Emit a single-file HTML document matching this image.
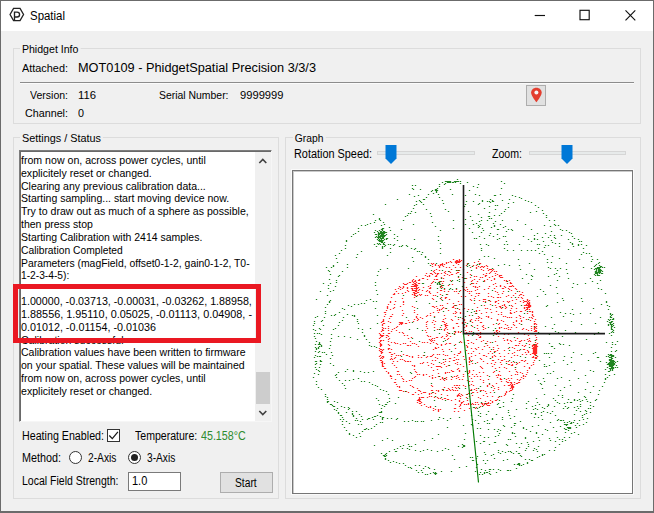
<!DOCTYPE html>
<html><head><meta charset="utf-8"><title>Spatial</title>
<style>
html,body{margin:0;padding:0;}
body{width:654px;height:513px;overflow:hidden;background:#f0f0f0;font-family:"Liberation Sans",sans-serif;font-size:11px;color:#000;position:relative;}
.abs,.t{position:absolute;}
.t,.line,.glabel{transform-origin:0 0;}
.t{white-space:nowrap;line-height:13px;height:13px;}
#win{position:absolute;left:0;top:0;width:652px;height:510px;border:1px solid #6b6b6b;border-bottom-width:2px;background:#f0f0f0;}
#titlebar{position:absolute;left:1px;top:1px;width:652px;height:30px;background:#fff;}
.grp{position:absolute;border:1px solid #dcdcdc;box-sizing:border-box;}
.glabel{position:absolute;background:#f0f0f0;padding:0 2px;line-height:13px;white-space:nowrap;}
.f12{font-size:12px;line-height:14px;height:14px;}
#tbo{position:absolute;left:19px;top:150px;width:253px;height:272px;box-sizing:border-box;border:1px solid #7c7c7c;border-right-color:#f6f6f6;border-bottom-color:#f6f6f6;}
#tb{position:absolute;left:20px;top:151px;width:251px;height:270px;box-sizing:border-box;background:#fff;border:1px solid #696969;border-right:0;border-bottom:0;overflow:hidden;}
#tb .line{position:absolute;left:2px;white-space:nowrap;line-height:13px;height:13px;}
#sb{position:absolute;left:234px;top:0;width:16px;height:269px;background:#f0f0f0;}
#thumb{position:absolute;left:1px;top:220px;width:14px;height:32px;background:#cdcdcd;}
#redbox{position:absolute;left:13px;top:284px;width:238px;height:49px;border:5px solid #ea1822;}
.btn{position:absolute;box-sizing:border-box;background:#e1e1e1;border:1px solid #adadad;}
.track{position:absolute;height:4px;background:#e7eaea;border:1px solid #d6d6d6;box-sizing:border-box;}
#canvas{position:absolute;left:292px;top:170px;width:341px;height:324px;box-sizing:border-box;background:#fff;border:1px solid #767676;box-shadow:0 0 0 1px #fafafa, inset 1px 1px 0 0 #cacaca;}
</style></head><body>
<div id="win"></div>
<div id="titlebar">
 <svg class="abs" style="left:7px;top:5px" width="20" height="20" viewBox="0 0 20 20">
  <g transform="translate(8.8,8.5) scale(0.925) translate(-9.1,-9.25)">
  <path d="M1.8 9.3 L5.6 2.6 H12.6 L16.4 9.3 L12.6 15.9 H5.6 Z" fill="none" stroke="#222" stroke-width="1.4"/>
  <path d="M6.6 15.6 V6.6 H9.4 A2.7 2.7 0 0 1 9.4 12 H6.8" fill="none" stroke="#222" stroke-width="1.45"/>
  </g>
 </svg>
 <div class="t" id="title" style="transform:scaleX(0.9536);left:29px;top:7px;font-size:12px;line-height:16px;height:16px;">Spatial</div>
 <svg class="abs" style="left:520px;top:0" width="132" height="30" viewBox="0 0 132 30">
  <path d="M13.7 14.5H24" stroke="#111" stroke-width="1.15" fill="none"/>
  <rect x="59" y="9.3" width="9.2" height="9.4" stroke="#111" stroke-width="1.15" fill="none"/>
  <path d="M104.5 9.3L114.3 19.3M114.3 9.3L104.5 19.3" stroke="#111" stroke-width="1.15" fill="none"/>
 </svg>
</div>

<!-- Phidget Info group -->
<div class="grp" style="left:13px;top:48px;width:628px;height:76px;"></div>
<div class="glabel" id="g1" style="transform:scaleX(0.9622);left:20px;top:43px;">Phidget Info</div>
<div class="t" id="att" style="transform:scaleX(0.9896);left:22px;top:62px;">Attached:</div>
<div class="t" id="dev" style="transform:scaleX(1.0194);left:78px;top:60px;font-size:12.5px;line-height:16px;height:16px;">MOT0109 - PhidgetSpatial Precision 3/3/3</div>
<div class="abs" style="left:20px;top:82px;width:614px;height:1px;background:#8c8c8c;"></div>
<div class="abs" style="left:20px;top:83px;width:614px;height:1px;background:#fbfbfb;"></div>
<div class="t" id="ver" style="transform:scaleX(0.9560);left:30px;top:89px;">Version:</div>
<div class="t" id="verv" style="transform:scaleX(1.0258);left:78px;top:89px;">116</div>
<div class="t" id="ser" style="transform:scaleX(0.9474);left:159px;top:89px;">Serial Number:</div>
<div class="t" id="serv" style="transform:scaleX(1.0157);left:240px;top:89px;">9999999</div>
<div class="t" id="chan" style="transform:scaleX(0.9762);left:25px;top:107px;">Channel:</div>
<div class="t" id="chanv" style="transform:scaleX(0.9796);left:78px;top:107px;">0</div>
<div class="btn" style="left:526px;top:85px;width:20px;height:21px;"></div>
<svg class="abs" style="left:530px;top:87px" width="13" height="16" viewBox="0 0 13 16">
 <path d="M6.4 0.7C3.3 0.7 1.1 2.9 1.1 5.6C1.1 9 6.4 15.3 6.4 15.3C6.4 15.3 11.7 9 11.7 5.6C11.7 2.9 9.5 0.7 6.4 0.7Z" fill="#e33e2f"/>
 <circle cx="6.4" cy="5.4" r="2" fill="#f6f6f6"/>
</svg>

<!-- Settings group -->
<div class="grp" style="left:13px;top:137px;width:266px;height:362px;"></div>
<div class="glabel" id="g2" style="transform:scaleX(0.9862);left:20px;top:132px;">Settings / Status</div>
<div id="tbo"></div>
<div id="tb">
 <div class="line" id="L0" style="left:0.3px;top:1.90px;transform:scaleX(0.9627);">from now on, across power cycles, until</div>
 <div class="line" id="L1" style="left:0.3px;top:14.73px;transform:scaleX(0.9585);">explicitely reset or changed.</div>
 <div class="line" id="L2" style="left:0.3px;top:27.56px;transform:scaleX(0.9564);">Clearing any previous calibration data...</div>
 <div class="line" id="L3" style="left:0.3px;top:40.39px;transform:scaleX(0.9560);">Starting sampling... start moving device now.</div>
 <div class="line" id="L4" style="left:0.3px;top:53.22px;transform:scaleX(0.9615);">Try to draw out as much of a sphere as possible,</div>
 <div class="line" id="L5" style="left:0.3px;top:66.05px;transform:scaleX(0.9559);">then press stop</div>
 <div class="line" id="L6" style="left:0.3px;top:78.88px;transform:scaleX(0.9504);">Starting Calibration with 2414 samples.</div>
 <div class="line" id="L7" style="left:0.3px;top:91.71px;transform:scaleX(0.9344);">Calibration Completed</div>
 <div class="line" id="L8" style="left:0.3px;top:104.54px;transform:scaleX(0.9434);">Parameters (magField, offset0-1-2, gain0-1-2, T0-</div>
 <div class="line" id="L9" style="left:0.3px;top:117.37px;transform:scaleX(0.9294);">1-2-3-4-5):</div>
 <div class="line" id="L11" style="left:0.3px;top:143.03px;transform:scaleX(0.9726);">1.00000, -0.03713, -0.00031, -0.03262, 1.88958,</div>
 <div class="line" id="L12" style="left:0.3px;top:155.86px;transform:scaleX(0.9861);">1.88556, 1.95110, 0.05025, -0.01113, 0.04908, -</div>
 <div class="line" id="L13" style="left:0.3px;top:168.69px;transform:scaleX(0.9780);">0.01012, -0.01154, -0.01036</div>
 <div class="line" id="L14" style="left:0.3px;top:181.52px;transform:scaleX(0.9579);">Calibration successful</div>
 <div class="line" id="L15" style="left:0.3px;top:194.35px;transform:scaleX(0.9562);">Calibration values have been written to firmware</div>
 <div class="line" id="L16" style="left:0.3px;top:207.18px;transform:scaleX(0.9585);">on your spatial. These values will be maintained</div>
 <div class="line" id="L17" style="left:0.3px;top:220.01px;transform:scaleX(0.9621);">from now on, across power cycles, until</div>
 <div class="line" id="L18" style="left:0.3px;top:232.84px;transform:scaleX(0.9622);">explicitely reset or changed.</div>
 <div id="sb">
  <svg class="abs" style="left:0;top:0" width="16" height="269" viewBox="0 0 16 269">
   <path d="M4.3 11L7.8 7.5L11.3 11" stroke="#404040" stroke-width="1.6" fill="none"/>
   <path d="M4.3 259L7.8 262.5L11.3 259" stroke="#404040" stroke-width="1.6" fill="none"/>
  </svg>
  <div id="thumb"></div>
 </div>
</div>
<div id="redbox"></div>

<div class="t f12" id="heat" style="transform:scaleX(0.8905);left:22px;top:429px;">Heating Enabled:</div>
<div class="abs" style="left:107px;top:429px;width:13px;height:13px;box-sizing:border-box;border:1px solid #333;background:#fff;"></div>
<svg class="abs" style="left:107px;top:429px" width="13" height="13" viewBox="0 0 13 13"><path d="M2.3 6.5L5.3 9.6L10.9 2.9" stroke="#1a1a1a" stroke-width="1.25" fill="none"/></svg>
<div class="t f12" id="temp" style="transform:scaleX(0.8797);left:135px;top:429px;">Temperature:</div>
<div class="t f12" id="tempv" style="transform:scaleX(0.8909);left:201px;top:429px;color:#2e8b2e;">45.158°C</div>

<div class="t f12" id="meth" style="transform:scaleX(0.8995);left:22px;top:451px;">Method:</div>
<div class="abs" style="left:69px;top:451px;width:13px;height:13px;box-sizing:border-box;border:1px solid #333;border-radius:50%;background:#fff;"></div>
<div class="t f12" id="ax2" style="transform:scaleX(0.8547);left:88px;top:451px;">2-Axis</div>
<div class="abs" style="left:128px;top:451px;width:13px;height:13px;box-sizing:border-box;border:1px solid #333;border-radius:50%;background:#fff;"></div>
<div class="abs" style="left:131px;top:454px;width:7px;height:7px;border-radius:50%;background:#222;"></div>
<div class="t f12" id="ax3" style="transform:scaleX(0.8487);left:147px;top:451px;">3-Axis</div>

<div class="t f12" id="lfs" style="transform:scaleX(0.8768);left:22px;top:474px;">Local Field Strength:</div>
<div class="abs" style="left:128px;top:472px;width:53px;height:19px;box-sizing:border-box;border:1px solid #7a7a7a;background:#fff;"></div>
<div class="t f12" id="lfsv" style="transform:scaleX(0.9169);left:132px;top:474px;">1.0</div>
<div class="btn" style="left:220px;top:472px;width:53px;height:21px;"></div>
<div class="t f12" id="start" style="transform:scaleX(0.8562);left:235px;top:476px;">Start</div>

<!-- Graph group -->
<div class="grp" style="left:285px;top:137px;width:356px;height:362px;"></div>
<div class="glabel" id="g3" style="transform:scaleX(0.9353);left:293px;top:132px;">Graph</div>
<div class="t f12" id="rot" style="transform:scaleX(0.9063);left:294px;top:147px;">Rotation Speed:</div>
<div class="track" style="left:377px;top:151px;width:98px;"></div>
<svg class="abs" style="left:385px;top:145px" width="12" height="20" viewBox="0 0 12 20"><path d="M0.5 0H11.5V13.5L6 19L0.5 13.5Z" fill="#0078d7"/></svg>
<div class="t f12" id="zoom" style="transform:scaleX(0.8819);left:492px;top:147px;">Zoom:</div>
<div class="track" style="left:529px;top:151px;width:97px;"></div>
<svg class="abs" style="left:561px;top:145px" width="12" height="20" viewBox="0 0 12 20"><path d="M0.5 0H11.5V13.5L6 19L0.5 13.5Z" fill="#0078d7"/></svg>
<div id="canvas">
 <svg class="abs" style="left:0;top:0" width="339" height="322" viewBox="0 0 339 322">
  <path d="M138.85 92.90h1.3v1.2h-1.3zM137.85 91.90h1.3v1.2h-1.3zM139.85 91.90h1.3v1.2h-1.3zM141.85 93.90h1.3v1.2h-1.3zM141.85 92.90h1.3v1.2h-1.3zM144.85 93.90h1.3v1.2h-1.3zM146.85 92.90h1.3v1.2h-1.3zM147.85 92.90h1.3v1.2h-1.3zM148.85 92.90h1.3v1.2h-1.3zM152.85 91.90h1.3v1.2h-1.3zM152.85 90.90h1.3v1.2h-1.3zM154.85 90.90h1.3v1.2h-1.3zM156.85 89.90h1.3v1.2h-1.3zM157.85 90.90h1.3v1.2h-1.3zM159.85 87.90h1.3v1.2h-1.3zM134.85 114.90h1.3v1.2h-1.3zM152.85 95.90h1.3v1.2h-1.3zM143.85 120.90h1.3v1.2h-1.3zM148.85 91.90h1.3v1.2h-1.3zM138.85 94.90h1.3v1.2h-1.3zM135.85 103.90h1.3v1.2h-1.3zM133.85 123.90h1.3v1.2h-1.3zM143.85 107.90h1.3v1.2h-1.3zM150.85 117.90h1.3v1.2h-1.3zM155.85 103.90h1.3v1.2h-1.3zM141.85 104.90h1.3v1.2h-1.3zM131.85 103.90h1.3v1.2h-1.3zM151.85 125.90h1.3v1.2h-1.3zM154.85 113.90h1.3v1.2h-1.3zM141.85 101.90h1.3v1.2h-1.3zM150.85 92.90h1.3v1.2h-1.3zM142.85 107.90h1.3v1.2h-1.3zM154.85 119.90h1.3v1.2h-1.3zM149.85 94.90h1.3v1.2h-1.3zM153.85 122.90h1.3v1.2h-1.3zM147.85 101.90h1.3v1.2h-1.3zM146.85 93.90h1.3v1.2h-1.3zM152.85 125.90h1.3v1.2h-1.3zM146.85 115.90h1.3v1.2h-1.3zM155.85 95.90h1.3v1.2h-1.3zM158.85 112.90h1.3v1.2h-1.3zM138.85 110.90h1.3v1.2h-1.3zM151.85 101.90h1.3v1.2h-1.3zM158.85 102.90h1.3v1.2h-1.3zM159.85 93.90h1.3v1.2h-1.3zM157.85 109.90h1.3v1.2h-1.3zM147.85 109.90h1.3v1.2h-1.3zM139.85 123.90h1.3v1.2h-1.3zM160.85 119.90h1.3v1.2h-1.3zM148.85 93.90h1.3v1.2h-1.3zM155.85 99.90h1.3v1.2h-1.3zM157.85 97.90h1.3v1.2h-1.3zM145.85 94.90h1.3v1.2h-1.3zM145.85 95.90h1.3v1.2h-1.3zM145.85 98.90h1.3v1.2h-1.3zM142.85 97.90h1.3v1.2h-1.3zM140.85 98.90h1.3v1.2h-1.3zM139.85 99.90h1.3v1.2h-1.3zM137.85 101.90h1.3v1.2h-1.3zM136.85 101.90h1.3v1.2h-1.3zM135.85 104.90h1.3v1.2h-1.3zM133.85 104.90h1.3v1.2h-1.3zM133.85 107.90h1.3v1.2h-1.3zM129.85 106.90h1.3v1.2h-1.3zM128.85 106.90h1.3v1.2h-1.3zM124.85 108.90h1.3v1.2h-1.3zM125.85 108.90h1.3v1.2h-1.3zM121.85 108.90h1.3v1.2h-1.3zM120.85 109.90h1.3v1.2h-1.3zM119.85 110.90h1.3v1.2h-1.3zM118.85 109.90h1.3v1.2h-1.3zM115.85 110.90h1.3v1.2h-1.3zM113.85 111.90h1.3v1.2h-1.3zM111.85 112.90h1.3v1.2h-1.3zM110.85 112.90h1.3v1.2h-1.3zM109.85 114.90h1.3v1.2h-1.3zM109.85 115.90h1.3v1.2h-1.3zM105.85 114.90h1.3v1.2h-1.3zM104.85 116.90h1.3v1.2h-1.3zM101.85 117.90h1.3v1.2h-1.3zM102.85 119.90h1.3v1.2h-1.3zM100.85 121.90h1.3v1.2h-1.3zM99.85 122.90h1.3v1.2h-1.3zM100.85 122.90h1.3v1.2h-1.3zM97.85 125.90h1.3v1.2h-1.3zM124.85 118.90h1.3v1.2h-1.3zM120.85 120.90h1.3v1.2h-1.3zM125.85 111.90h1.3v1.2h-1.3zM120.85 116.90h1.3v1.2h-1.3zM120.85 125.90h1.3v1.2h-1.3zM122.85 114.90h1.3v1.2h-1.3zM122.85 113.90h1.3v1.2h-1.3zM125.85 107.90h1.3v1.2h-1.3zM121.85 121.90h1.3v1.2h-1.3zM122.85 124.90h1.3v1.2h-1.3zM122.85 116.90h1.3v1.2h-1.3zM121.85 112.90h1.3v1.2h-1.3zM124.85 111.90h1.3v1.2h-1.3zM121.85 114.90h1.3v1.2h-1.3zM119.85 107.90h1.3v1.2h-1.3zM121.85 119.90h1.3v1.2h-1.3zM120.85 113.90h1.3v1.2h-1.3zM119.85 120.90h1.3v1.2h-1.3zM122.85 112.90h1.3v1.2h-1.3zM123.85 113.90h1.3v1.2h-1.3zM120.85 122.90h1.3v1.2h-1.3zM125.85 122.90h1.3v1.2h-1.3zM119.85 118.90h1.3v1.2h-1.3zM120.85 114.90h1.3v1.2h-1.3zM121.85 123.90h1.3v1.2h-1.3zM122.85 118.90h1.3v1.2h-1.3zM121.85 113.90h1.3v1.2h-1.3zM120.85 121.90h1.3v1.2h-1.3zM121.85 116.90h1.3v1.2h-1.3zM118.85 117.90h1.3v1.2h-1.3zM118.85 122.90h1.3v1.2h-1.3zM118.85 114.90h1.3v1.2h-1.3zM121.85 111.90h1.3v1.2h-1.3zM117.85 116.90h1.3v1.2h-1.3zM120.85 111.90h1.3v1.2h-1.3zM122.85 115.90h1.3v1.2h-1.3zM118.85 118.90h1.3v1.2h-1.3zM121.85 109.90h1.3v1.2h-1.3zM118.85 112.90h1.3v1.2h-1.3zM121.85 118.90h1.3v1.2h-1.3zM123.85 116.90h1.3v1.2h-1.3zM120.85 123.90h1.3v1.2h-1.3zM124.85 120.90h1.3v1.2h-1.3zM119.85 114.90h1.3v1.2h-1.3zM122.85 119.90h1.3v1.2h-1.3zM122.85 117.90h1.3v1.2h-1.3zM119.85 112.90h1.3v1.2h-1.3zM123.85 120.90h1.3v1.2h-1.3zM122.85 121.90h1.3v1.2h-1.3zM122.85 110.90h1.3v1.2h-1.3zM120.85 118.90h1.3v1.2h-1.3zM118.85 116.90h1.3v1.2h-1.3zM143.85 101.90h1.3v1.2h-1.3zM142.85 103.90h1.3v1.2h-1.3zM142.85 104.90h1.3v1.2h-1.3zM140.85 107.90h1.3v1.2h-1.3zM139.85 109.90h1.3v1.2h-1.3zM137.85 111.90h1.3v1.2h-1.3zM136.85 113.90h1.3v1.2h-1.3zM136.85 115.90h1.3v1.2h-1.3zM135.85 116.90h1.3v1.2h-1.3zM135.85 119.90h1.3v1.2h-1.3zM151.85 99.90h1.3v1.2h-1.3zM150.85 100.90h1.3v1.2h-1.3zM150.85 103.90h1.3v1.2h-1.3zM147.85 105.90h1.3v1.2h-1.3zM149.85 106.90h1.3v1.2h-1.3zM149.85 109.90h1.3v1.2h-1.3zM148.85 111.90h1.3v1.2h-1.3zM147.85 113.90h1.3v1.2h-1.3zM147.85 114.90h1.3v1.2h-1.3zM147.85 118.90h1.3v1.2h-1.3zM146.85 118.90h1.3v1.2h-1.3zM146.85 122.90h1.3v1.2h-1.3zM147.85 125.90h1.3v1.2h-1.3zM124.85 115.90h1.3v1.2h-1.3zM125.85 117.90h1.3v1.2h-1.3zM128.85 118.90h1.3v1.2h-1.3zM132.85 119.90h1.3v1.2h-1.3zM133.85 118.90h1.3v1.2h-1.3zM135.85 120.90h1.3v1.2h-1.3zM136.85 121.90h1.3v1.2h-1.3zM141.85 123.90h1.3v1.2h-1.3zM113.85 115.90h1.3v1.2h-1.3zM113.85 118.90h1.3v1.2h-1.3zM111.85 120.90h1.3v1.2h-1.3zM108.85 121.90h1.3v1.2h-1.3zM108.85 126.90h1.3v1.2h-1.3zM164.85 89.90h1.3v1.2h-1.3zM163.85 89.90h1.3v1.2h-1.3zM165.85 90.90h1.3v1.2h-1.3zM165.85 89.90h1.3v1.2h-1.3zM165.85 88.90h1.3v1.2h-1.3zM162.85 89.90h1.3v1.2h-1.3zM162.85 90.90h1.3v1.2h-1.3zM163.85 88.90h1.3v1.2h-1.3zM163.85 90.90h1.3v1.2h-1.3zM161.85 90.90h1.3v1.2h-1.3zM164.85 90.90h1.3v1.2h-1.3zM162.85 91.90h1.3v1.2h-1.3zM167.85 88.90h1.3v1.2h-1.3zM166.85 89.90h1.3v1.2h-1.3zM165.85 87.90h1.3v1.2h-1.3zM161.85 89.90h1.3v1.2h-1.3zM162.85 88.90h1.3v1.2h-1.3zM184.85 89.90h1.3v1.2h-1.3zM185.85 91.90h1.3v1.2h-1.3zM186.85 91.90h1.3v1.2h-1.3zM188.85 94.90h1.3v1.2h-1.3zM187.85 94.90h1.3v1.2h-1.3zM190.85 94.90h1.3v1.2h-1.3zM192.85 93.90h1.3v1.2h-1.3zM193.85 96.90h1.3v1.2h-1.3zM197.85 97.90h1.3v1.2h-1.3zM196.85 97.90h1.3v1.2h-1.3zM198.85 98.90h1.3v1.2h-1.3zM200.85 99.90h1.3v1.2h-1.3zM201.85 101.90h1.3v1.2h-1.3zM203.85 102.90h1.3v1.2h-1.3zM205.85 104.90h1.3v1.2h-1.3zM206.85 103.90h1.3v1.2h-1.3zM207.85 105.90h1.3v1.2h-1.3zM208.85 105.90h1.3v1.2h-1.3zM212.85 108.90h1.3v1.2h-1.3zM212.85 109.90h1.3v1.2h-1.3zM213.85 111.90h1.3v1.2h-1.3zM216.85 111.90h1.3v1.2h-1.3zM217.85 111.90h1.3v1.2h-1.3zM218.85 113.90h1.3v1.2h-1.3zM219.85 114.90h1.3v1.2h-1.3zM221.85 116.90h1.3v1.2h-1.3zM222.85 117.90h1.3v1.2h-1.3zM225.85 119.90h1.3v1.2h-1.3zM228.85 120.90h1.3v1.2h-1.3zM227.85 122.90h1.3v1.2h-1.3zM229.85 123.90h1.3v1.2h-1.3zM208.85 121.90h1.3v1.2h-1.3zM212.85 124.90h1.3v1.2h-1.3zM192.85 101.90h1.3v1.2h-1.3zM169.85 97.90h1.3v1.2h-1.3zM173.85 100.90h1.3v1.2h-1.3zM163.85 98.90h1.3v1.2h-1.3zM173.85 91.90h1.3v1.2h-1.3zM197.85 108.90h1.3v1.2h-1.3zM200.85 116.90h1.3v1.2h-1.3zM197.85 124.90h1.3v1.2h-1.3zM166.85 95.90h1.3v1.2h-1.3zM165.85 98.90h1.3v1.2h-1.3zM214.85 123.90h1.3v1.2h-1.3zM183.85 109.90h1.3v1.2h-1.3zM181.85 118.90h1.3v1.2h-1.3zM203.85 120.90h1.3v1.2h-1.3zM193.85 94.90h1.3v1.2h-1.3zM227.85 125.90h1.3v1.2h-1.3zM162.85 117.90h1.3v1.2h-1.3zM172.85 93.90h1.3v1.2h-1.3zM161.85 95.90h1.3v1.2h-1.3zM206.85 105.90h1.3v1.2h-1.3zM179.85 111.90h1.3v1.2h-1.3zM186.85 105.90h1.3v1.2h-1.3zM185.85 121.90h1.3v1.2h-1.3zM201.85 103.90h1.3v1.2h-1.3zM198.85 104.90h1.3v1.2h-1.3zM184.85 123.90h1.3v1.2h-1.3zM177.85 123.90h1.3v1.2h-1.3zM221.85 121.90h1.3v1.2h-1.3zM172.85 106.90h1.3v1.2h-1.3zM172.85 115.90h1.3v1.2h-1.3zM177.85 109.90h1.3v1.2h-1.3zM171.85 124.90h1.3v1.2h-1.3zM180.85 90.90h1.3v1.2h-1.3zM200.85 106.90h1.3v1.2h-1.3zM195.85 97.90h1.3v1.2h-1.3zM201.85 111.90h1.3v1.2h-1.3zM195.85 105.90h1.3v1.2h-1.3zM206.85 125.90h1.3v1.2h-1.3zM180.85 104.90h1.3v1.2h-1.3zM166.85 118.90h1.3v1.2h-1.3zM177.85 119.90h1.3v1.2h-1.3zM190.85 108.90h1.3v1.2h-1.3zM194.85 98.90h1.3v1.2h-1.3zM184.85 94.90h1.3v1.2h-1.3zM175.85 119.90h1.3v1.2h-1.3zM217.85 125.90h1.3v1.2h-1.3zM217.85 114.90h1.3v1.2h-1.3zM217.85 118.90h1.3v1.2h-1.3zM173.85 119.90h1.3v1.2h-1.3zM182.85 96.90h1.3v1.2h-1.3zM196.85 100.90h1.3v1.2h-1.3zM216.85 110.90h1.3v1.2h-1.3zM225.85 123.90h1.3v1.2h-1.3zM182.85 93.90h1.3v1.2h-1.3zM209.85 116.90h1.3v1.2h-1.3zM169.85 115.90h1.3v1.2h-1.3zM164.85 121.90h1.3v1.2h-1.3zM215.85 117.90h1.3v1.2h-1.3zM195.85 101.90h1.3v1.2h-1.3zM171.85 118.90h1.3v1.2h-1.3zM176.85 112.90h1.3v1.2h-1.3zM215.85 114.90h1.3v1.2h-1.3zM197.85 99.90h1.3v1.2h-1.3zM179.85 93.90h1.3v1.2h-1.3zM206.85 113.90h1.3v1.2h-1.3zM226.85 122.90h1.3v1.2h-1.3zM181.85 124.90h1.3v1.2h-1.3zM204.85 125.90h1.3v1.2h-1.3zM180.85 107.90h1.3v1.2h-1.3zM194.85 116.90h1.3v1.2h-1.3zM178.85 94.90h1.3v1.2h-1.3zM164.85 100.90h1.3v1.2h-1.3zM205.85 103.90h1.3v1.2h-1.3zM189.85 95.90h1.3v1.2h-1.3zM194.85 124.90h1.3v1.2h-1.3zM169.85 103.90h1.3v1.2h-1.3zM199.85 112.90h1.3v1.2h-1.3zM178.85 108.90h1.3v1.2h-1.3zM173.85 117.90h1.3v1.2h-1.3zM164.85 92.90h1.3v1.2h-1.3zM199.85 97.90h1.3v1.2h-1.3zM211.85 115.90h1.3v1.2h-1.3zM183.85 117.90h1.3v1.2h-1.3zM206.85 114.90h1.3v1.2h-1.3zM192.85 103.90h1.3v1.2h-1.3zM168.85 105.90h1.3v1.2h-1.3zM179.85 114.90h1.3v1.2h-1.3zM190.85 109.90h1.3v1.2h-1.3zM164.85 105.90h1.3v1.2h-1.3zM188.85 105.90h1.3v1.2h-1.3zM167.85 124.90h1.3v1.2h-1.3zM202.85 99.90h1.3v1.2h-1.3zM182.85 95.90h1.3v1.2h-1.3zM189.85 102.90h1.3v1.2h-1.3zM216.85 114.90h1.3v1.2h-1.3zM191.85 104.90h1.3v1.2h-1.3zM182.85 111.90h1.3v1.2h-1.3zM189.85 98.90h1.3v1.2h-1.3zM194.85 121.90h1.3v1.2h-1.3zM224.85 125.90h1.3v1.2h-1.3zM208.85 116.90h1.3v1.2h-1.3zM181.85 115.90h1.3v1.2h-1.3zM207.85 103.90h1.3v1.2h-1.3zM215.85 108.90h1.3v1.2h-1.3zM190.85 117.90h1.3v1.2h-1.3zM178.85 111.90h1.3v1.2h-1.3zM176.85 102.90h1.3v1.2h-1.3zM201.85 119.90h1.3v1.2h-1.3zM202.85 114.90h1.3v1.2h-1.3zM214.85 116.90h1.3v1.2h-1.3zM210.85 108.90h1.3v1.2h-1.3zM199.85 125.90h1.3v1.2h-1.3zM170.85 117.90h1.3v1.2h-1.3zM183.85 115.90h1.3v1.2h-1.3zM200.85 107.90h1.3v1.2h-1.3zM204.85 122.90h1.3v1.2h-1.3zM170.85 110.90h1.3v1.2h-1.3zM193.85 107.90h1.3v1.2h-1.3zM181.85 114.90h1.3v1.2h-1.3zM209.85 119.90h1.3v1.2h-1.3zM187.85 97.90h1.3v1.2h-1.3zM185.85 107.90h1.3v1.2h-1.3zM162.85 101.90h1.3v1.2h-1.3zM182.85 121.90h1.3v1.2h-1.3zM195.85 114.90h1.3v1.2h-1.3zM162.85 119.90h1.3v1.2h-1.3zM210.85 114.90h1.3v1.2h-1.3zM184.85 121.90h1.3v1.2h-1.3zM176.85 105.90h1.3v1.2h-1.3zM182.85 104.90h1.3v1.2h-1.3zM203.85 125.90h1.3v1.2h-1.3zM176.85 95.90h1.3v1.2h-1.3zM191.85 103.90h1.3v1.2h-1.3zM219.85 123.90h1.3v1.2h-1.3zM185.85 114.90h1.3v1.2h-1.3zM175.85 121.90h1.3v1.2h-1.3zM186.85 95.90h1.3v1.2h-1.3zM163.85 100.90h1.3v1.2h-1.3zM96.85 130.90h1.3v1.2h-1.3zM96.85 129.90h1.3v1.2h-1.3zM94.85 132.90h1.3v1.2h-1.3zM93.85 134.90h1.3v1.2h-1.3zM93.85 135.90h1.3v1.2h-1.3zM93.85 136.90h1.3v1.2h-1.3zM92.85 138.90h1.3v1.2h-1.3zM91.85 140.90h1.3v1.2h-1.3zM90.85 140.90h1.3v1.2h-1.3zM91.85 142.90h1.3v1.2h-1.3zM90.85 144.90h1.3v1.2h-1.3zM89.85 147.90h1.3v1.2h-1.3zM89.85 148.90h1.3v1.2h-1.3zM88.85 149.90h1.3v1.2h-1.3zM89.85 149.90h1.3v1.2h-1.3zM90.85 151.90h1.3v1.2h-1.3zM88.85 153.90h1.3v1.2h-1.3zM88.85 155.90h1.3v1.2h-1.3zM88.85 157.90h1.3v1.2h-1.3zM87.85 159.90h1.3v1.2h-1.3zM85.85 161.90h1.3v1.2h-1.3zM86.85 162.90h1.3v1.2h-1.3zM86.85 163.90h1.3v1.2h-1.3zM86.85 165.90h1.3v1.2h-1.3zM85.85 166.90h1.3v1.2h-1.3zM86.85 168.90h1.3v1.2h-1.3zM85.85 170.90h1.3v1.2h-1.3zM86.85 171.90h1.3v1.2h-1.3zM86.85 172.90h1.3v1.2h-1.3zM86.85 173.90h1.3v1.2h-1.3zM85.85 176.90h1.3v1.2h-1.3zM86.85 177.90h1.3v1.2h-1.3zM85.85 178.90h1.3v1.2h-1.3zM86.85 179.90h1.3v1.2h-1.3zM87.85 180.90h1.3v1.2h-1.3zM86.85 183.90h1.3v1.2h-1.3zM85.85 184.90h1.3v1.2h-1.3zM86.85 186.90h1.3v1.2h-1.3zM86.85 188.90h1.3v1.2h-1.3zM88.85 190.90h1.3v1.2h-1.3zM88.85 191.90h1.3v1.2h-1.3zM89.85 194.90h1.3v1.2h-1.3zM88.85 194.90h1.3v1.2h-1.3zM90.85 196.90h1.3v1.2h-1.3zM91.85 196.90h1.3v1.2h-1.3zM92.85 199.90h1.3v1.2h-1.3zM94.85 200.90h1.3v1.2h-1.3zM94.85 201.90h1.3v1.2h-1.3zM96.85 203.90h1.3v1.2h-1.3zM96.85 204.90h1.3v1.2h-1.3zM97.85 204.90h1.3v1.2h-1.3zM97.85 206.90h1.3v1.2h-1.3zM101.85 207.90h1.3v1.2h-1.3zM100.85 210.90h1.3v1.2h-1.3zM101.85 210.90h1.3v1.2h-1.3zM102.85 212.90h1.3v1.2h-1.3zM103.85 214.90h1.3v1.2h-1.3zM105.85 215.90h1.3v1.2h-1.3zM105.85 214.90h1.3v1.2h-1.3zM107.85 218.90h1.3v1.2h-1.3zM106.85 218.90h1.3v1.2h-1.3zM87.85 150.90h1.3v1.2h-1.3zM88.85 152.90h1.3v1.2h-1.3zM89.85 156.90h1.3v1.2h-1.3zM91.85 156.90h1.3v1.2h-1.3zM89.85 158.90h1.3v1.2h-1.3zM89.85 163.90h1.3v1.2h-1.3zM88.85 164.90h1.3v1.2h-1.3zM87.85 164.90h1.3v1.2h-1.3zM89.85 168.90h1.3v1.2h-1.3zM86.85 169.90h1.3v1.2h-1.3zM87.85 172.90h1.3v1.2h-1.3zM87.85 173.90h1.3v1.2h-1.3zM88.85 178.90h1.3v1.2h-1.3zM87.85 179.90h1.3v1.2h-1.3zM87.85 181.90h1.3v1.2h-1.3zM88.85 184.90h1.3v1.2h-1.3zM89.85 184.90h1.3v1.2h-1.3zM89.85 185.90h1.3v1.2h-1.3zM87.85 188.90h1.3v1.2h-1.3zM90.85 191.90h1.3v1.2h-1.3zM88.85 189.90h1.3v1.2h-1.3zM88.85 192.90h1.3v1.2h-1.3zM89.85 151.90h1.3v1.2h-1.3zM88.85 158.90h1.3v1.2h-1.3zM89.85 161.90h1.3v1.2h-1.3zM88.85 163.90h1.3v1.2h-1.3zM87.85 163.90h1.3v1.2h-1.3zM87.85 168.90h1.3v1.2h-1.3zM86.85 174.90h1.3v1.2h-1.3zM87.85 177.90h1.3v1.2h-1.3zM88.85 180.90h1.3v1.2h-1.3zM87.85 185.90h1.3v1.2h-1.3zM88.85 186.90h1.3v1.2h-1.3zM87.85 190.90h1.3v1.2h-1.3zM88.85 193.90h1.3v1.2h-1.3zM101.85 129.90h1.3v1.2h-1.3zM100.85 132.90h1.3v1.2h-1.3zM100.85 135.90h1.3v1.2h-1.3zM99.85 136.90h1.3v1.2h-1.3zM96.85 137.90h1.3v1.2h-1.3zM98.85 142.90h1.3v1.2h-1.3zM96.85 144.90h1.3v1.2h-1.3zM97.85 144.90h1.3v1.2h-1.3zM95.85 146.90h1.3v1.2h-1.3zM94.85 149.90h1.3v1.2h-1.3zM96.85 150.90h1.3v1.2h-1.3zM94.85 154.90h1.3v1.2h-1.3zM94.85 156.90h1.3v1.2h-1.3zM94.85 158.90h1.3v1.2h-1.3zM95.85 161.90h1.3v1.2h-1.3zM93.85 163.90h1.3v1.2h-1.3zM94.85 164.90h1.3v1.2h-1.3zM95.85 166.90h1.3v1.2h-1.3zM94.85 167.90h1.3v1.2h-1.3zM94.85 169.90h1.3v1.2h-1.3zM94.85 172.90h1.3v1.2h-1.3zM95.85 173.90h1.3v1.2h-1.3zM95.85 176.90h1.3v1.2h-1.3zM97.85 177.90h1.3v1.2h-1.3zM95.85 180.90h1.3v1.2h-1.3zM97.85 182.90h1.3v1.2h-1.3zM97.85 184.90h1.3v1.2h-1.3zM97.85 186.90h1.3v1.2h-1.3zM96.85 187.90h1.3v1.2h-1.3zM99.85 189.90h1.3v1.2h-1.3zM98.85 191.90h1.3v1.2h-1.3zM100.85 193.90h1.3v1.2h-1.3zM102.85 195.90h1.3v1.2h-1.3zM103.85 199.90h1.3v1.2h-1.3zM104.85 199.90h1.3v1.2h-1.3zM103.85 202.90h1.3v1.2h-1.3zM105.85 202.90h1.3v1.2h-1.3zM107.85 204.90h1.3v1.2h-1.3zM108.85 206.90h1.3v1.2h-1.3zM109.85 207.90h1.3v1.2h-1.3zM112.85 209.90h1.3v1.2h-1.3zM92.85 165.90h1.3v1.2h-1.3zM92.85 163.90h1.3v1.2h-1.3zM94.85 161.90h1.3v1.2h-1.3zM97.85 159.90h1.3v1.2h-1.3zM98.85 157.90h1.3v1.2h-1.3zM100.85 156.90h1.3v1.2h-1.3zM103.85 154.90h1.3v1.2h-1.3zM102.85 155.90h1.3v1.2h-1.3zM105.85 150.90h1.3v1.2h-1.3zM107.85 151.90h1.3v1.2h-1.3zM108.85 150.90h1.3v1.2h-1.3zM111.85 151.90h1.3v1.2h-1.3zM112.85 151.90h1.3v1.2h-1.3zM114.85 148.90h1.3v1.2h-1.3zM115.85 150.90h1.3v1.2h-1.3zM119.85 149.90h1.3v1.2h-1.3zM120.85 147.90h1.3v1.2h-1.3zM123.85 146.90h1.3v1.2h-1.3zM124.85 147.90h1.3v1.2h-1.3zM126.85 145.90h1.3v1.2h-1.3zM128.85 146.90h1.3v1.2h-1.3zM132.85 144.90h1.3v1.2h-1.3zM133.85 143.90h1.3v1.2h-1.3zM136.85 143.90h1.3v1.2h-1.3zM136.85 141.90h1.3v1.2h-1.3zM139.85 140.90h1.3v1.2h-1.3zM143.85 138.90h1.3v1.2h-1.3zM145.85 138.90h1.3v1.2h-1.3zM145.85 137.90h1.3v1.2h-1.3zM148.85 136.90h1.3v1.2h-1.3zM106.85 151.90h1.3v1.2h-1.3zM107.85 150.90h1.3v1.2h-1.3zM107.85 152.90h1.3v1.2h-1.3zM106.85 150.90h1.3v1.2h-1.3zM105.85 152.90h1.3v1.2h-1.3zM108.85 151.90h1.3v1.2h-1.3zM102.85 158.90h1.3v1.2h-1.3zM105.85 160.90h1.3v1.2h-1.3zM108.85 160.90h1.3v1.2h-1.3zM109.85 161.90h1.3v1.2h-1.3zM110.85 163.90h1.3v1.2h-1.3zM113.85 163.90h1.3v1.2h-1.3zM114.85 166.90h1.3v1.2h-1.3zM117.85 165.90h1.3v1.2h-1.3zM116.85 169.90h1.3v1.2h-1.3zM118.85 171.90h1.3v1.2h-1.3zM120.85 171.90h1.3v1.2h-1.3zM122.85 172.90h1.3v1.2h-1.3zM124.85 174.90h1.3v1.2h-1.3zM128.85 170.90h1.3v1.2h-1.3zM130.85 170.90h1.3v1.2h-1.3zM133.85 170.90h1.3v1.2h-1.3zM135.85 167.90h1.3v1.2h-1.3zM136.85 168.90h1.3v1.2h-1.3zM138.85 166.90h1.3v1.2h-1.3zM140.85 166.90h1.3v1.2h-1.3zM142.85 165.90h1.3v1.2h-1.3zM143.85 165.90h1.3v1.2h-1.3zM147.85 165.90h1.3v1.2h-1.3zM148.85 164.90h1.3v1.2h-1.3zM152.85 164.90h1.3v1.2h-1.3zM133.85 149.90h1.3v1.2h-1.3zM132.85 150.90h1.3v1.2h-1.3zM132.85 152.90h1.3v1.2h-1.3zM132.85 154.90h1.3v1.2h-1.3zM133.85 156.90h1.3v1.2h-1.3zM131.85 158.90h1.3v1.2h-1.3zM132.85 160.90h1.3v1.2h-1.3zM133.85 163.90h1.3v1.2h-1.3zM134.85 164.90h1.3v1.2h-1.3zM137.85 167.90h1.3v1.2h-1.3zM137.85 169.90h1.3v1.2h-1.3zM139.85 170.90h1.3v1.2h-1.3zM142.85 171.90h1.3v1.2h-1.3zM143.85 172.90h1.3v1.2h-1.3zM147.85 173.90h1.3v1.2h-1.3zM147.85 172.90h1.3v1.2h-1.3zM151.85 172.90h1.3v1.2h-1.3zM152.85 171.90h1.3v1.2h-1.3zM153.85 167.90h1.3v1.2h-1.3zM154.85 166.90h1.3v1.2h-1.3zM156.85 164.90h1.3v1.2h-1.3zM152.85 162.90h1.3v1.2h-1.3zM153.85 160.90h1.3v1.2h-1.3zM153.85 157.90h1.3v1.2h-1.3zM151.85 156.90h1.3v1.2h-1.3zM151.85 153.90h1.3v1.2h-1.3zM151.85 152.90h1.3v1.2h-1.3zM150.85 152.90h1.3v1.2h-1.3zM153.85 153.90h1.3v1.2h-1.3zM152.85 153.90h1.3v1.2h-1.3zM152.85 151.90h1.3v1.2h-1.3zM152.85 155.90h1.3v1.2h-1.3zM151.85 154.90h1.3v1.2h-1.3zM118.85 134.90h1.3v1.2h-1.3zM120.85 135.90h1.3v1.2h-1.3zM120.85 138.90h1.3v1.2h-1.3zM120.85 140.90h1.3v1.2h-1.3zM123.85 142.90h1.3v1.2h-1.3zM122.85 144.90h1.3v1.2h-1.3zM122.85 145.90h1.3v1.2h-1.3zM123.85 148.90h1.3v1.2h-1.3zM109.85 129.90h1.3v1.2h-1.3zM109.85 130.90h1.3v1.2h-1.3zM109.85 132.90h1.3v1.2h-1.3zM106.85 134.90h1.3v1.2h-1.3zM108.85 138.90h1.3v1.2h-1.3zM109.85 141.90h1.3v1.2h-1.3zM108.85 143.90h1.3v1.2h-1.3zM98.85 187.90h1.3v1.2h-1.3zM100.85 186.90h1.3v1.2h-1.3zM101.85 185.90h1.3v1.2h-1.3zM103.85 189.90h1.3v1.2h-1.3zM106.85 187.90h1.3v1.2h-1.3zM108.85 187.90h1.3v1.2h-1.3zM110.85 188.90h1.3v1.2h-1.3zM111.85 189.90h1.3v1.2h-1.3zM113.85 189.90h1.3v1.2h-1.3zM114.85 189.90h1.3v1.2h-1.3zM116.85 189.90h1.3v1.2h-1.3zM118.85 193.90h1.3v1.2h-1.3zM120.85 193.90h1.3v1.2h-1.3zM120.85 194.90h1.3v1.2h-1.3zM120.85 197.90h1.3v1.2h-1.3zM121.85 199.90h1.3v1.2h-1.3zM122.85 200.90h1.3v1.2h-1.3zM123.85 202.90h1.3v1.2h-1.3zM121.85 204.90h1.3v1.2h-1.3zM120.85 205.90h1.3v1.2h-1.3zM118.85 206.90h1.3v1.2h-1.3zM117.85 208.90h1.3v1.2h-1.3zM115.85 208.90h1.3v1.2h-1.3zM109.85 209.90h1.3v1.2h-1.3zM97.85 170.90h1.3v1.2h-1.3zM100.85 170.90h1.3v1.2h-1.3zM101.85 171.90h1.3v1.2h-1.3zM103.85 171.90h1.3v1.2h-1.3zM106.85 172.90h1.3v1.2h-1.3zM109.85 171.90h1.3v1.2h-1.3zM111.85 171.90h1.3v1.2h-1.3zM113.85 173.90h1.3v1.2h-1.3zM114.85 173.90h1.3v1.2h-1.3zM116.85 173.90h1.3v1.2h-1.3zM89.85 177.90h1.3v1.2h-1.3zM94.85 176.90h1.3v1.2h-1.3zM94.85 177.90h1.3v1.2h-1.3zM96.85 180.90h1.3v1.2h-1.3zM98.85 182.90h1.3v1.2h-1.3zM100.85 181.90h1.3v1.2h-1.3zM102.85 183.90h1.3v1.2h-1.3zM104.85 183.90h1.3v1.2h-1.3zM106.85 183.90h1.3v1.2h-1.3zM109.85 182.90h1.3v1.2h-1.3zM112.85 183.90h1.3v1.2h-1.3zM113.85 183.90h1.3v1.2h-1.3zM115.85 184.90h1.3v1.2h-1.3zM118.85 184.90h1.3v1.2h-1.3zM118.85 185.90h1.3v1.2h-1.3zM124.85 183.90h1.3v1.2h-1.3zM124.85 185.90h1.3v1.2h-1.3zM127.85 185.90h1.3v1.2h-1.3zM129.85 183.90h1.3v1.2h-1.3zM132.85 185.90h1.3v1.2h-1.3zM133.85 184.90h1.3v1.2h-1.3zM136.85 184.90h1.3v1.2h-1.3zM138.85 183.90h1.3v1.2h-1.3zM139.85 182.90h1.3v1.2h-1.3zM143.85 182.90h1.3v1.2h-1.3zM145.85 182.90h1.3v1.2h-1.3zM149.85 182.90h1.3v1.2h-1.3zM151.85 183.90h1.3v1.2h-1.3zM153.85 183.90h1.3v1.2h-1.3zM156.85 186.90h1.3v1.2h-1.3zM126.85 191.90h1.3v1.2h-1.3zM128.85 191.90h1.3v1.2h-1.3zM129.85 190.90h1.3v1.2h-1.3zM133.85 190.90h1.3v1.2h-1.3zM134.85 193.90h1.3v1.2h-1.3zM137.85 191.90h1.3v1.2h-1.3zM139.85 192.90h1.3v1.2h-1.3zM142.85 194.90h1.3v1.2h-1.3zM143.85 194.90h1.3v1.2h-1.3zM145.85 194.90h1.3v1.2h-1.3zM147.85 195.90h1.3v1.2h-1.3zM152.85 194.90h1.3v1.2h-1.3zM154.85 193.90h1.3v1.2h-1.3zM125.85 202.90h1.3v1.2h-1.3zM129.85 202.90h1.3v1.2h-1.3zM129.85 203.90h1.3v1.2h-1.3zM132.85 202.90h1.3v1.2h-1.3zM135.85 204.90h1.3v1.2h-1.3zM138.85 203.90h1.3v1.2h-1.3zM138.85 206.90h1.3v1.2h-1.3zM141.85 205.90h1.3v1.2h-1.3zM144.85 204.90h1.3v1.2h-1.3zM145.85 204.90h1.3v1.2h-1.3zM148.85 205.90h1.3v1.2h-1.3zM150.85 206.90h1.3v1.2h-1.3zM151.85 206.90h1.3v1.2h-1.3zM152.85 205.90h1.3v1.2h-1.3zM124.85 228.90h1.3v1.2h-1.3zM124.85 227.90h1.3v1.2h-1.3zM125.85 225.90h1.3v1.2h-1.3zM127.85 225.90h1.3v1.2h-1.3zM128.85 225.90h1.3v1.2h-1.3zM129.85 225.90h1.3v1.2h-1.3zM133.85 225.90h1.3v1.2h-1.3zM135.85 224.90h1.3v1.2h-1.3zM137.85 224.90h1.3v1.2h-1.3zM140.85 225.90h1.3v1.2h-1.3zM141.85 224.90h1.3v1.2h-1.3zM143.85 225.90h1.3v1.2h-1.3zM144.85 226.90h1.3v1.2h-1.3zM148.85 227.90h1.3v1.2h-1.3zM146.85 226.90h1.3v1.2h-1.3zM150.85 226.90h1.3v1.2h-1.3zM151.85 226.90h1.3v1.2h-1.3zM153.85 227.90h1.3v1.2h-1.3zM154.85 227.90h1.3v1.2h-1.3zM157.85 228.90h1.3v1.2h-1.3zM123.85 228.90h1.3v1.2h-1.3zM126.85 231.90h1.3v1.2h-1.3zM127.85 233.90h1.3v1.2h-1.3zM130.85 232.90h1.3v1.2h-1.3zM132.85 234.90h1.3v1.2h-1.3zM134.85 235.90h1.3v1.2h-1.3zM136.85 234.90h1.3v1.2h-1.3zM136.85 235.90h1.3v1.2h-1.3zM139.85 238.90h1.3v1.2h-1.3zM139.85 236.90h1.3v1.2h-1.3zM141.85 237.90h1.3v1.2h-1.3zM144.85 237.90h1.3v1.2h-1.3zM144.85 239.90h1.3v1.2h-1.3zM144.85 238.90h1.3v1.2h-1.3zM146.85 237.90h1.3v1.2h-1.3zM125.85 229.90h1.3v1.2h-1.3zM125.85 226.90h1.3v1.2h-1.3zM125.85 228.90h1.3v1.2h-1.3zM125.85 227.90h1.3v1.2h-1.3zM123.85 230.90h1.3v1.2h-1.3zM127.85 230.90h1.3v1.2h-1.3zM126.85 227.90h1.3v1.2h-1.3zM125.85 231.90h1.3v1.2h-1.3zM126.85 229.90h1.3v1.2h-1.3zM116.85 213.90h1.3v1.2h-1.3zM118.85 214.90h1.3v1.2h-1.3zM119.85 215.90h1.3v1.2h-1.3zM123.85 216.90h1.3v1.2h-1.3zM124.85 218.90h1.3v1.2h-1.3zM125.85 218.90h1.3v1.2h-1.3zM127.85 221.90h1.3v1.2h-1.3zM105.85 218.90h1.3v1.2h-1.3zM109.85 219.90h1.3v1.2h-1.3zM111.85 219.90h1.3v1.2h-1.3zM112.85 219.90h1.3v1.2h-1.3zM114.85 220.90h1.3v1.2h-1.3zM118.85 222.90h1.3v1.2h-1.3zM119.85 222.90h1.3v1.2h-1.3zM121.85 220.90h1.3v1.2h-1.3zM124.85 222.90h1.3v1.2h-1.3zM126.85 219.90h1.3v1.2h-1.3zM129.85 220.90h1.3v1.2h-1.3zM130.85 220.90h1.3v1.2h-1.3zM131.85 220.90h1.3v1.2h-1.3zM135.85 221.90h1.3v1.2h-1.3zM135.85 222.90h1.3v1.2h-1.3zM137.85 221.90h1.3v1.2h-1.3zM139.85 220.90h1.3v1.2h-1.3zM141.85 221.90h1.3v1.2h-1.3zM142.85 218.90h1.3v1.2h-1.3zM144.85 218.90h1.3v1.2h-1.3zM148.85 217.90h1.3v1.2h-1.3zM149.85 218.90h1.3v1.2h-1.3zM152.85 218.90h1.3v1.2h-1.3zM154.85 216.90h1.3v1.2h-1.3zM155.85 217.90h1.3v1.2h-1.3zM158.85 217.90h1.3v1.2h-1.3zM161.85 215.90h1.3v1.2h-1.3zM155.85 171.90h1.3v1.2h-1.3zM159.85 134.90h1.3v1.2h-1.3zM147.85 191.90h1.3v1.2h-1.3zM137.85 218.90h1.3v1.2h-1.3zM144.85 194.90h1.3v1.2h-1.3zM138.85 134.90h1.3v1.2h-1.3zM138.85 205.90h1.3v1.2h-1.3zM159.85 218.90h1.3v1.2h-1.3zM149.85 135.90h1.3v1.2h-1.3zM155.85 177.90h1.3v1.2h-1.3zM155.85 189.90h1.3v1.2h-1.3zM150.85 143.90h1.3v1.2h-1.3zM139.85 134.90h1.3v1.2h-1.3zM146.85 155.90h1.3v1.2h-1.3zM159.85 131.90h1.3v1.2h-1.3zM154.85 138.90h1.3v1.2h-1.3zM138.85 218.90h1.3v1.2h-1.3zM141.85 185.90h1.3v1.2h-1.3zM150.85 166.90h1.3v1.2h-1.3zM144.85 140.90h1.3v1.2h-1.3zM153.85 163.90h1.3v1.2h-1.3zM150.85 208.90h1.3v1.2h-1.3zM138.85 168.90h1.3v1.2h-1.3zM144.85 219.90h1.3v1.2h-1.3zM151.85 146.90h1.3v1.2h-1.3zM147.85 127.90h1.3v1.2h-1.3zM148.85 133.90h1.3v1.2h-1.3zM139.85 177.90h1.3v1.2h-1.3zM149.85 147.90h1.3v1.2h-1.3zM150.85 157.90h1.3v1.2h-1.3zM153.85 131.90h1.3v1.2h-1.3zM156.85 171.90h1.3v1.2h-1.3zM140.85 155.90h1.3v1.2h-1.3zM151.85 136.90h1.3v1.2h-1.3zM158.85 148.90h1.3v1.2h-1.3zM146.85 133.90h1.3v1.2h-1.3zM147.85 222.90h1.3v1.2h-1.3zM140.85 144.90h1.3v1.2h-1.3zM149.85 190.90h1.3v1.2h-1.3zM139.85 148.90h1.3v1.2h-1.3zM150.85 150.90h1.3v1.2h-1.3zM137.85 195.90h1.3v1.2h-1.3zM157.85 207.90h1.3v1.2h-1.3zM157.85 147.90h1.3v1.2h-1.3zM143.85 186.90h1.3v1.2h-1.3zM151.85 189.90h1.3v1.2h-1.3zM149.85 149.90h1.3v1.2h-1.3zM142.85 134.90h1.3v1.2h-1.3zM137.85 184.90h1.3v1.2h-1.3zM138.85 214.90h1.3v1.2h-1.3zM159.85 141.90h1.3v1.2h-1.3zM159.85 188.90h1.3v1.2h-1.3zM136.85 164.90h1.3v1.2h-1.3zM145.85 157.90h1.3v1.2h-1.3zM138.85 150.90h1.3v1.2h-1.3zM136.85 171.90h1.3v1.2h-1.3zM148.85 149.90h1.3v1.2h-1.3zM158.85 215.90h1.3v1.2h-1.3zM148.85 206.90h1.3v1.2h-1.3zM144.85 201.90h1.3v1.2h-1.3zM155.85 161.90h1.3v1.2h-1.3zM154.85 161.90h1.3v1.2h-1.3zM140.85 168.90h1.3v1.2h-1.3zM139.85 198.90h1.3v1.2h-1.3zM142.85 176.90h1.3v1.2h-1.3zM155.85 186.90h1.3v1.2h-1.3zM158.85 199.90h1.3v1.2h-1.3zM153.85 200.90h1.3v1.2h-1.3zM153.85 218.90h1.3v1.2h-1.3zM150.85 192.90h1.3v1.2h-1.3zM149.85 179.90h1.3v1.2h-1.3zM159.85 156.90h1.3v1.2h-1.3zM141.85 176.90h1.3v1.2h-1.3zM143.85 197.90h1.3v1.2h-1.3zM151.85 126.90h1.3v1.2h-1.3zM141.85 188.90h1.3v1.2h-1.3zM146.85 194.90h1.3v1.2h-1.3zM147.85 137.90h1.3v1.2h-1.3zM153.85 223.90h1.3v1.2h-1.3zM138.85 188.90h1.3v1.2h-1.3zM151.85 187.90h1.3v1.2h-1.3zM148.85 177.90h1.3v1.2h-1.3zM160.85 213.90h1.3v1.2h-1.3zM146.85 207.90h1.3v1.2h-1.3zM152.85 207.90h1.3v1.2h-1.3zM160.85 133.90h1.3v1.2h-1.3zM141.85 149.90h1.3v1.2h-1.3zM156.85 218.90h1.3v1.2h-1.3zM141.85 175.90h1.3v1.2h-1.3zM157.85 198.90h1.3v1.2h-1.3zM150.85 215.90h1.3v1.2h-1.3zM158.85 135.90h1.3v1.2h-1.3zM159.85 155.90h1.3v1.2h-1.3zM151.85 201.90h1.3v1.2h-1.3zM143.85 157.90h1.3v1.2h-1.3zM158.85 205.90h1.3v1.2h-1.3zM159.85 135.90h1.3v1.2h-1.3zM151.85 200.90h1.3v1.2h-1.3zM159.85 199.90h1.3v1.2h-1.3zM143.85 136.90h1.3v1.2h-1.3zM140.85 152.90h1.3v1.2h-1.3zM150.85 158.90h1.3v1.2h-1.3zM140.85 135.90h1.3v1.2h-1.3zM160.85 162.90h1.3v1.2h-1.3zM149.85 207.90h1.3v1.2h-1.3zM137.85 213.90h1.3v1.2h-1.3zM155.85 200.90h1.3v1.2h-1.3zM144.85 175.90h1.3v1.2h-1.3zM156.85 100.90h1.3v1.2h-1.3zM106.85 117.90h1.3v1.2h-1.3zM157.85 102.90h1.3v1.2h-1.3zM112.85 112.90h1.3v1.2h-1.3zM148.85 115.90h1.3v1.2h-1.3zM140.85 100.90h1.3v1.2h-1.3zM113.85 116.90h1.3v1.2h-1.3zM144.85 101.90h1.3v1.2h-1.3zM139.85 127.90h1.3v1.2h-1.3zM138.85 126.90h1.3v1.2h-1.3zM108.85 116.90h1.3v1.2h-1.3zM123.85 123.90h1.3v1.2h-1.3zM136.85 116.90h1.3v1.2h-1.3zM155.85 127.90h1.3v1.2h-1.3zM109.85 111.90h1.3v1.2h-1.3zM106.85 115.90h1.3v1.2h-1.3zM114.85 119.90h1.3v1.2h-1.3zM153.85 102.90h1.3v1.2h-1.3zM117.85 114.90h1.3v1.2h-1.3zM104.85 121.90h1.3v1.2h-1.3zM143.85 102.90h1.3v1.2h-1.3zM138.85 102.90h1.3v1.2h-1.3zM132.85 101.90h1.3v1.2h-1.3zM156.85 108.90h1.3v1.2h-1.3zM122.85 104.90h1.3v1.2h-1.3zM145.85 109.90h1.3v1.2h-1.3zM126.85 123.90h1.3v1.2h-1.3zM127.85 122.90h1.3v1.2h-1.3zM129.85 115.90h1.3v1.2h-1.3zM116.85 110.90h1.3v1.2h-1.3zM118.85 108.90h1.3v1.2h-1.3zM150.85 119.90h1.3v1.2h-1.3zM131.85 123.90h1.3v1.2h-1.3zM228.85 126.90h1.3v1.2h-1.3zM229.85 128.90h1.3v1.2h-1.3zM231.85 129.90h1.3v1.2h-1.3zM232.85 129.90h1.3v1.2h-1.3zM233.85 131.90h1.3v1.2h-1.3zM235.85 132.90h1.3v1.2h-1.3zM234.85 135.90h1.3v1.2h-1.3zM235.85 135.90h1.3v1.2h-1.3zM235.85 137.90h1.3v1.2h-1.3zM238.85 139.90h1.3v1.2h-1.3zM238.85 140.90h1.3v1.2h-1.3zM238.85 143.90h1.3v1.2h-1.3zM238.85 142.90h1.3v1.2h-1.3zM239.85 144.90h1.3v1.2h-1.3zM238.85 146.90h1.3v1.2h-1.3zM241.85 147.90h1.3v1.2h-1.3zM240.85 149.90h1.3v1.2h-1.3zM240.85 151.90h1.3v1.2h-1.3zM242.85 152.90h1.3v1.2h-1.3zM240.85 154.90h1.3v1.2h-1.3zM241.85 155.90h1.3v1.2h-1.3zM240.85 157.90h1.3v1.2h-1.3zM240.85 159.90h1.3v1.2h-1.3zM240.85 161.90h1.3v1.2h-1.3zM241.85 161.90h1.3v1.2h-1.3zM241.85 163.90h1.3v1.2h-1.3zM242.85 165.90h1.3v1.2h-1.3zM242.85 167.90h1.3v1.2h-1.3zM241.85 168.90h1.3v1.2h-1.3zM241.85 172.90h1.3v1.2h-1.3zM242.85 172.90h1.3v1.2h-1.3zM241.85 174.90h1.3v1.2h-1.3zM242.85 175.90h1.3v1.2h-1.3zM240.85 178.90h1.3v1.2h-1.3zM241.85 180.90h1.3v1.2h-1.3zM238.85 181.90h1.3v1.2h-1.3zM240.85 182.90h1.3v1.2h-1.3zM239.85 185.90h1.3v1.2h-1.3zM241.85 186.90h1.3v1.2h-1.3zM240.85 188.90h1.3v1.2h-1.3zM239.85 190.90h1.3v1.2h-1.3zM239.85 192.90h1.3v1.2h-1.3zM237.85 193.90h1.3v1.2h-1.3zM235.85 195.90h1.3v1.2h-1.3zM235.85 196.90h1.3v1.2h-1.3zM233.85 198.90h1.3v1.2h-1.3zM233.85 200.90h1.3v1.2h-1.3zM232.85 202.90h1.3v1.2h-1.3zM231.85 204.90h1.3v1.2h-1.3zM229.85 203.90h1.3v1.2h-1.3zM229.85 204.90h1.3v1.2h-1.3zM229.85 206.90h1.3v1.2h-1.3zM226.85 207.90h1.3v1.2h-1.3zM225.85 208.90h1.3v1.2h-1.3zM225.85 210.90h1.3v1.2h-1.3zM224.85 210.90h1.3v1.2h-1.3zM222.85 211.90h1.3v1.2h-1.3zM219.85 215.90h1.3v1.2h-1.3zM218.85 214.90h1.3v1.2h-1.3zM218.85 216.90h1.3v1.2h-1.3zM216.85 216.90h1.3v1.2h-1.3zM216.85 218.90h1.3v1.2h-1.3zM215.85 219.90h1.3v1.2h-1.3zM212.85 220.90h1.3v1.2h-1.3zM211.85 222.90h1.3v1.2h-1.3zM211.85 221.90h1.3v1.2h-1.3zM210.85 223.90h1.3v1.2h-1.3zM207.85 224.90h1.3v1.2h-1.3zM205.85 224.90h1.3v1.2h-1.3zM204.85 225.90h1.3v1.2h-1.3zM203.85 227.90h1.3v1.2h-1.3zM202.85 228.90h1.3v1.2h-1.3zM201.85 228.90h1.3v1.2h-1.3zM198.85 229.90h1.3v1.2h-1.3zM198.85 230.90h1.3v1.2h-1.3zM196.85 231.90h1.3v1.2h-1.3zM194.85 231.90h1.3v1.2h-1.3zM195.85 233.90h1.3v1.2h-1.3zM192.85 232.90h1.3v1.2h-1.3zM190.85 232.90h1.3v1.2h-1.3zM188.85 231.90h1.3v1.2h-1.3zM187.85 231.90h1.3v1.2h-1.3zM183.85 230.90h1.3v1.2h-1.3zM181.85 232.90h1.3v1.2h-1.3zM179.85 232.90h1.3v1.2h-1.3zM178.85 231.90h1.3v1.2h-1.3zM177.85 232.90h1.3v1.2h-1.3zM174.85 231.90h1.3v1.2h-1.3zM174.85 232.90h1.3v1.2h-1.3zM172.85 232.90h1.3v1.2h-1.3zM170.85 232.90h1.3v1.2h-1.3zM168.85 230.90h1.3v1.2h-1.3zM167.85 231.90h1.3v1.2h-1.3zM165.85 228.90h1.3v1.2h-1.3zM232.85 133.90h1.3v1.2h-1.3zM235.85 130.90h1.3v1.2h-1.3zM233.85 128.90h1.3v1.2h-1.3zM234.85 132.90h1.3v1.2h-1.3zM236.85 134.90h1.3v1.2h-1.3zM233.85 130.90h1.3v1.2h-1.3zM236.85 139.90h1.3v1.2h-1.3zM235.85 139.90h1.3v1.2h-1.3zM235.85 133.90h1.3v1.2h-1.3zM233.85 135.90h1.3v1.2h-1.3zM235.85 131.90h1.3v1.2h-1.3zM234.85 133.90h1.3v1.2h-1.3zM233.85 127.90h1.3v1.2h-1.3zM233.85 137.90h1.3v1.2h-1.3zM234.85 134.90h1.3v1.2h-1.3zM235.85 134.90h1.3v1.2h-1.3zM232.85 137.90h1.3v1.2h-1.3zM234.85 131.90h1.3v1.2h-1.3zM234.85 129.90h1.3v1.2h-1.3zM232.85 132.90h1.3v1.2h-1.3zM233.85 136.90h1.3v1.2h-1.3zM233.85 141.90h1.3v1.2h-1.3zM236.85 133.90h1.3v1.2h-1.3zM230.85 133.90h1.3v1.2h-1.3zM232.85 135.90h1.3v1.2h-1.3zM230.85 136.90h1.3v1.2h-1.3zM235.85 128.90h1.3v1.2h-1.3zM233.85 133.90h1.3v1.2h-1.3zM230.85 135.90h1.3v1.2h-1.3zM242.85 159.90h1.3v1.2h-1.3zM240.85 155.90h1.3v1.2h-1.3zM241.85 151.90h1.3v1.2h-1.3zM242.85 156.90h1.3v1.2h-1.3zM241.85 159.90h1.3v1.2h-1.3zM240.85 156.90h1.3v1.2h-1.3zM242.85 154.90h1.3v1.2h-1.3zM240.85 152.90h1.3v1.2h-1.3zM242.85 158.90h1.3v1.2h-1.3zM241.85 158.90h1.3v1.2h-1.3zM239.85 175.90h1.3v1.2h-1.3zM238.85 173.90h1.3v1.2h-1.3zM240.85 179.90h1.3v1.2h-1.3zM241.85 173.90h1.3v1.2h-1.3zM241.85 179.90h1.3v1.2h-1.3zM238.85 176.90h1.3v1.2h-1.3zM240.85 175.90h1.3v1.2h-1.3zM239.85 180.90h1.3v1.2h-1.3zM238.85 174.90h1.3v1.2h-1.3zM240.85 176.90h1.3v1.2h-1.3zM243.85 174.90h1.3v1.2h-1.3zM242.85 185.90h1.3v1.2h-1.3zM240.85 174.90h1.3v1.2h-1.3zM239.85 172.90h1.3v1.2h-1.3zM239.85 181.90h1.3v1.2h-1.3zM241.85 176.90h1.3v1.2h-1.3zM240.85 177.90h1.3v1.2h-1.3zM241.85 182.90h1.3v1.2h-1.3zM242.85 174.90h1.3v1.2h-1.3zM240.85 173.90h1.3v1.2h-1.3zM240.85 180.90h1.3v1.2h-1.3zM241.85 170.90h1.3v1.2h-1.3zM241.85 177.90h1.3v1.2h-1.3zM242.85 176.90h1.3v1.2h-1.3zM242.85 181.90h1.3v1.2h-1.3zM239.85 177.90h1.3v1.2h-1.3zM239.85 173.90h1.3v1.2h-1.3zM242.85 180.90h1.3v1.2h-1.3zM242.85 177.90h1.3v1.2h-1.3zM239.85 178.90h1.3v1.2h-1.3zM241.85 183.90h1.3v1.2h-1.3zM243.85 184.90h1.3v1.2h-1.3zM239.85 179.90h1.3v1.2h-1.3zM242.85 179.90h1.3v1.2h-1.3zM242.85 178.90h1.3v1.2h-1.3zM240.85 181.90h1.3v1.2h-1.3zM242.85 186.90h1.3v1.2h-1.3zM241.85 185.90h1.3v1.2h-1.3zM239.85 176.90h1.3v1.2h-1.3zM243.85 171.90h1.3v1.2h-1.3zM242.85 173.90h1.3v1.2h-1.3zM241.85 181.90h1.3v1.2h-1.3zM241.85 178.90h1.3v1.2h-1.3zM238.85 185.90h1.3v1.2h-1.3zM239.85 184.90h1.3v1.2h-1.3zM241.85 175.90h1.3v1.2h-1.3zM219.85 214.90h1.3v1.2h-1.3zM218.85 215.90h1.3v1.2h-1.3zM218.85 217.90h1.3v1.2h-1.3zM218.85 213.90h1.3v1.2h-1.3zM217.85 210.90h1.3v1.2h-1.3zM216.85 212.90h1.3v1.2h-1.3zM217.85 213.90h1.3v1.2h-1.3zM217.85 215.90h1.3v1.2h-1.3zM220.85 212.90h1.3v1.2h-1.3zM218.85 212.90h1.3v1.2h-1.3zM217.85 214.90h1.3v1.2h-1.3zM217.85 218.90h1.3v1.2h-1.3zM191.85 231.90h1.3v1.2h-1.3zM192.85 231.90h1.3v1.2h-1.3zM190.85 231.90h1.3v1.2h-1.3zM193.85 231.90h1.3v1.2h-1.3zM163.85 223.90h1.3v1.2h-1.3zM165.85 223.90h1.3v1.2h-1.3zM166.85 224.90h1.3v1.2h-1.3zM163.85 224.90h1.3v1.2h-1.3zM164.85 222.90h1.3v1.2h-1.3zM164.85 223.90h1.3v1.2h-1.3zM165.85 229.90h1.3v1.2h-1.3zM216.85 157.90h1.3v1.2h-1.3zM213.85 168.90h1.3v1.2h-1.3zM202.85 158.90h1.3v1.2h-1.3zM204.85 202.90h1.3v1.2h-1.3zM229.85 156.90h1.3v1.2h-1.3zM207.85 192.90h1.3v1.2h-1.3zM232.85 182.90h1.3v1.2h-1.3zM193.85 173.90h1.3v1.2h-1.3zM204.85 217.90h1.3v1.2h-1.3zM210.85 187.90h1.3v1.2h-1.3zM214.85 157.90h1.3v1.2h-1.3zM191.85 127.90h1.3v1.2h-1.3zM222.85 139.90h1.3v1.2h-1.3zM186.85 234.90h1.3v1.2h-1.3zM169.85 229.90h1.3v1.2h-1.3zM225.85 143.90h1.3v1.2h-1.3zM177.85 212.90h1.3v1.2h-1.3zM214.85 130.90h1.3v1.2h-1.3zM203.85 148.90h1.3v1.2h-1.3zM230.85 189.90h1.3v1.2h-1.3zM161.85 172.90h1.3v1.2h-1.3zM161.85 232.90h1.3v1.2h-1.3zM160.85 236.90h1.3v1.2h-1.3zM182.85 202.90h1.3v1.2h-1.3zM223.85 191.90h1.3v1.2h-1.3zM170.85 155.90h1.3v1.2h-1.3zM220.85 140.90h1.3v1.2h-1.3zM194.85 144.90h1.3v1.2h-1.3zM213.85 167.90h1.3v1.2h-1.3zM225.85 169.90h1.3v1.2h-1.3zM175.85 190.90h1.3v1.2h-1.3zM197.85 140.90h1.3v1.2h-1.3zM235.85 166.90h1.3v1.2h-1.3zM210.85 133.90h1.3v1.2h-1.3zM216.85 141.90h1.3v1.2h-1.3zM214.85 181.90h1.3v1.2h-1.3zM199.85 152.90h1.3v1.2h-1.3zM172.85 225.90h1.3v1.2h-1.3zM210.85 213.90h1.3v1.2h-1.3zM221.85 173.90h1.3v1.2h-1.3zM205.85 161.90h1.3v1.2h-1.3zM214.85 176.90h1.3v1.2h-1.3zM224.85 160.90h1.3v1.2h-1.3zM191.85 136.90h1.3v1.2h-1.3zM163.85 151.90h1.3v1.2h-1.3zM161.85 176.90h1.3v1.2h-1.3zM191.85 229.90h1.3v1.2h-1.3zM168.85 223.90h1.3v1.2h-1.3zM189.85 155.90h1.3v1.2h-1.3zM210.85 168.90h1.3v1.2h-1.3zM161.85 141.90h1.3v1.2h-1.3zM216.85 210.90h1.3v1.2h-1.3zM223.85 166.90h1.3v1.2h-1.3zM202.85 159.90h1.3v1.2h-1.3zM194.85 233.90h1.3v1.2h-1.3zM181.85 176.90h1.3v1.2h-1.3zM234.85 179.90h1.3v1.2h-1.3zM227.85 188.90h1.3v1.2h-1.3zM189.85 210.90h1.3v1.2h-1.3zM214.85 171.90h1.3v1.2h-1.3zM218.85 181.90h1.3v1.2h-1.3zM221.85 131.90h1.3v1.2h-1.3zM193.85 213.90h1.3v1.2h-1.3zM217.85 185.90h1.3v1.2h-1.3zM223.85 183.90h1.3v1.2h-1.3zM170.85 187.90h1.3v1.2h-1.3zM222.85 145.90h1.3v1.2h-1.3zM198.85 224.90h1.3v1.2h-1.3zM161.85 227.90h1.3v1.2h-1.3zM189.85 168.90h1.3v1.2h-1.3zM217.85 193.90h1.3v1.2h-1.3zM184.85 144.90h1.3v1.2h-1.3zM194.85 230.90h1.3v1.2h-1.3zM217.85 206.90h1.3v1.2h-1.3zM235.85 145.90h1.3v1.2h-1.3zM162.85 187.90h1.3v1.2h-1.3zM193.85 233.90h1.3v1.2h-1.3zM211.85 152.90h1.3v1.2h-1.3zM165.85 181.90h1.3v1.2h-1.3zM205.85 181.90h1.3v1.2h-1.3zM208.85 133.90h1.3v1.2h-1.3zM189.85 223.90h1.3v1.2h-1.3zM184.85 148.90h1.3v1.2h-1.3zM175.85 236.90h1.3v1.2h-1.3zM231.85 173.90h1.3v1.2h-1.3zM187.85 169.90h1.3v1.2h-1.3zM216.85 140.90h1.3v1.2h-1.3zM221.85 168.90h1.3v1.2h-1.3zM163.85 203.90h1.3v1.2h-1.3zM181.85 230.90h1.3v1.2h-1.3zM175.85 204.90h1.3v1.2h-1.3zM196.85 132.90h1.3v1.2h-1.3zM183.85 162.90h1.3v1.2h-1.3zM237.85 145.90h1.3v1.2h-1.3zM177.85 170.90h1.3v1.2h-1.3zM186.85 150.90h1.3v1.2h-1.3zM222.85 127.90h1.3v1.2h-1.3zM204.85 142.90h1.3v1.2h-1.3zM186.85 160.90h1.3v1.2h-1.3zM220.85 176.90h1.3v1.2h-1.3zM175.85 200.90h1.3v1.2h-1.3zM223.85 211.90h1.3v1.2h-1.3zM202.85 211.90h1.3v1.2h-1.3zM186.85 186.90h1.3v1.2h-1.3zM206.85 190.90h1.3v1.2h-1.3zM175.85 209.90h1.3v1.2h-1.3zM203.85 173.90h1.3v1.2h-1.3zM207.85 136.90h1.3v1.2h-1.3zM186.85 165.90h1.3v1.2h-1.3zM167.85 170.90h1.3v1.2h-1.3zM190.85 174.90h1.3v1.2h-1.3zM166.85 141.90h1.3v1.2h-1.3zM179.85 179.90h1.3v1.2h-1.3zM190.85 183.90h1.3v1.2h-1.3zM175.85 213.90h1.3v1.2h-1.3zM204.85 187.90h1.3v1.2h-1.3zM217.85 169.90h1.3v1.2h-1.3zM166.85 179.90h1.3v1.2h-1.3zM227.85 205.90h1.3v1.2h-1.3zM164.85 187.90h1.3v1.2h-1.3zM175.85 161.90h1.3v1.2h-1.3zM179.85 198.90h1.3v1.2h-1.3zM201.85 133.90h1.3v1.2h-1.3zM163.85 136.90h1.3v1.2h-1.3zM170.85 147.90h1.3v1.2h-1.3zM230.85 168.90h1.3v1.2h-1.3zM199.85 218.90h1.3v1.2h-1.3zM175.85 185.90h1.3v1.2h-1.3zM163.85 183.90h1.3v1.2h-1.3zM185.85 200.90h1.3v1.2h-1.3zM201.85 184.90h1.3v1.2h-1.3zM212.85 209.90h1.3v1.2h-1.3zM176.85 149.90h1.3v1.2h-1.3zM229.85 177.90h1.3v1.2h-1.3zM162.85 213.90h1.3v1.2h-1.3zM171.85 158.90h1.3v1.2h-1.3zM236.85 148.90h1.3v1.2h-1.3zM228.85 157.90h1.3v1.2h-1.3zM225.85 171.90h1.3v1.2h-1.3zM206.85 206.90h1.3v1.2h-1.3zM219.85 150.90h1.3v1.2h-1.3zM215.85 145.90h1.3v1.2h-1.3zM180.85 217.90h1.3v1.2h-1.3zM173.85 174.90h1.3v1.2h-1.3zM169.85 194.90h1.3v1.2h-1.3zM174.85 168.90h1.3v1.2h-1.3zM201.85 130.90h1.3v1.2h-1.3zM182.85 138.90h1.3v1.2h-1.3zM211.85 144.90h1.3v1.2h-1.3zM175.85 143.90h1.3v1.2h-1.3zM221.85 202.90h1.3v1.2h-1.3zM184.85 163.90h1.3v1.2h-1.3zM183.85 190.90h1.3v1.2h-1.3zM207.85 142.90h1.3v1.2h-1.3zM173.85 199.90h1.3v1.2h-1.3zM183.85 204.90h1.3v1.2h-1.3zM174.85 137.90h1.3v1.2h-1.3zM166.85 226.90h1.3v1.2h-1.3zM204.85 128.90h1.3v1.2h-1.3zM189.85 200.90h1.3v1.2h-1.3zM178.85 223.90h1.3v1.2h-1.3zM160.85 188.90h1.3v1.2h-1.3zM207.85 148.90h1.3v1.2h-1.3zM171.85 214.90h1.3v1.2h-1.3zM162.85 206.90h1.3v1.2h-1.3zM228.85 201.90h1.3v1.2h-1.3zM162.85 133.90h1.3v1.2h-1.3zM182.85 235.90h1.3v1.2h-1.3zM227.85 139.90h1.3v1.2h-1.3zM187.85 150.90h1.3v1.2h-1.3zM177.85 184.90h1.3v1.2h-1.3zM164.85 239.90h1.3v1.2h-1.3zM177.85 206.90h1.3v1.2h-1.3zM189.85 233.90h1.3v1.2h-1.3zM206.85 184.90h1.3v1.2h-1.3zM222.85 192.90h1.3v1.2h-1.3zM197.85 146.90h1.3v1.2h-1.3zM226.85 200.90h1.3v1.2h-1.3zM198.85 213.90h1.3v1.2h-1.3zM173.85 168.90h1.3v1.2h-1.3zM212.85 156.90h1.3v1.2h-1.3zM213.85 210.90h1.3v1.2h-1.3zM182.85 216.90h1.3v1.2h-1.3zM231.85 180.90h1.3v1.2h-1.3zM206.85 203.90h1.3v1.2h-1.3zM180.85 131.90h1.3v1.2h-1.3zM175.85 187.90h1.3v1.2h-1.3zM182.85 146.90h1.3v1.2h-1.3zM194.85 145.90h1.3v1.2h-1.3zM181.85 183.90h1.3v1.2h-1.3zM216.85 138.90h1.3v1.2h-1.3zM174.85 181.90h1.3v1.2h-1.3zM203.85 147.90h1.3v1.2h-1.3zM214.85 192.90h1.3v1.2h-1.3zM211.85 136.90h1.3v1.2h-1.3zM203.85 158.90h1.3v1.2h-1.3zM183.85 135.90h1.3v1.2h-1.3zM217.85 203.90h1.3v1.2h-1.3zM183.85 153.90h1.3v1.2h-1.3zM217.85 155.90h1.3v1.2h-1.3zM202.85 139.90h1.3v1.2h-1.3zM196.85 129.90h1.3v1.2h-1.3zM177.85 217.90h1.3v1.2h-1.3zM169.85 150.90h1.3v1.2h-1.3zM173.85 175.90h1.3v1.2h-1.3zM204.85 131.90h1.3v1.2h-1.3zM206.85 134.90h1.3v1.2h-1.3zM186.85 164.90h1.3v1.2h-1.3zM185.85 165.90h1.3v1.2h-1.3zM185.85 145.90h1.3v1.2h-1.3zM186.85 207.90h1.3v1.2h-1.3zM189.85 153.90h1.3v1.2h-1.3zM163.85 218.90h1.3v1.2h-1.3zM184.85 158.90h1.3v1.2h-1.3zM205.85 134.90h1.3v1.2h-1.3zM161.85 160.90h1.3v1.2h-1.3zM228.85 182.90h1.3v1.2h-1.3zM177.85 147.90h1.3v1.2h-1.3zM218.85 128.90h1.3v1.2h-1.3zM162.85 151.90h1.3v1.2h-1.3zM169.85 204.90h1.3v1.2h-1.3zM215.85 129.90h1.3v1.2h-1.3zM234.85 163.90h1.3v1.2h-1.3zM191.85 219.90h1.3v1.2h-1.3zM205.85 199.90h1.3v1.2h-1.3zM165.85 199.90h1.3v1.2h-1.3zM172.85 222.90h1.3v1.2h-1.3zM223.85 202.90h1.3v1.2h-1.3zM190.85 127.90h1.3v1.2h-1.3zM164.85 196.90h1.3v1.2h-1.3zM177.85 128.90h1.3v1.2h-1.3zM189.85 157.90h1.3v1.2h-1.3zM217.85 145.90h1.3v1.2h-1.3zM198.85 185.90h1.3v1.2h-1.3zM186.85 218.90h1.3v1.2h-1.3zM178.85 220.90h1.3v1.2h-1.3zM223.85 200.90h1.3v1.2h-1.3zM166.85 140.90h1.3v1.2h-1.3zM180.85 204.90h1.3v1.2h-1.3zM171.85 150.90h1.3v1.2h-1.3zM165.85 207.90h1.3v1.2h-1.3zM189.85 208.90h1.3v1.2h-1.3zM174.85 201.90h1.3v1.2h-1.3zM182.85 177.90h1.3v1.2h-1.3zM176.85 218.90h1.3v1.2h-1.3zM164.85 147.90h1.3v1.2h-1.3zM217.85 136.90h1.3v1.2h-1.3zM178.85 209.90h1.3v1.2h-1.3zM201.85 169.90h1.3v1.2h-1.3zM232.85 157.90h1.3v1.2h-1.3zM235.85 168.90h1.3v1.2h-1.3zM193.85 224.90h1.3v1.2h-1.3zM222.85 148.90h1.3v1.2h-1.3zM193.85 191.90h1.3v1.2h-1.3zM214.85 210.90h1.3v1.2h-1.3zM192.85 171.90h1.3v1.2h-1.3zM175.85 199.90h1.3v1.2h-1.3zM187.85 218.90h1.3v1.2h-1.3zM164.85 215.90h1.3v1.2h-1.3zM173.85 228.90h1.3v1.2h-1.3zM227.85 168.90h1.3v1.2h-1.3zM168.85 151.90h1.3v1.2h-1.3zM226.85 129.90h1.3v1.2h-1.3zM161.85 191.90h1.3v1.2h-1.3zM197.85 191.90h1.3v1.2h-1.3zM198.85 181.90h1.3v1.2h-1.3zM172.85 154.90h1.3v1.2h-1.3zM175.85 159.90h1.3v1.2h-1.3zM205.85 156.90h1.3v1.2h-1.3zM182.85 139.90h1.3v1.2h-1.3zM166.85 233.90h1.3v1.2h-1.3zM196.85 179.90h1.3v1.2h-1.3zM161.85 218.90h1.3v1.2h-1.3zM164.85 160.90h1.3v1.2h-1.3zM200.85 179.90h1.3v1.2h-1.3zM218.85 193.90h1.3v1.2h-1.3zM218.85 134.90h1.3v1.2h-1.3zM199.85 175.90h1.3v1.2h-1.3zM169.85 141.90h1.3v1.2h-1.3zM165.85 132.90h1.3v1.2h-1.3zM209.85 149.90h1.3v1.2h-1.3zM210.85 184.90h1.3v1.2h-1.3zM183.85 220.90h1.3v1.2h-1.3zM182.85 162.90h1.3v1.2h-1.3zM164.85 154.90h1.3v1.2h-1.3zM236.85 182.90h1.3v1.2h-1.3zM220.85 183.90h1.3v1.2h-1.3zM182.85 167.90h1.3v1.2h-1.3zM202.85 162.90h1.3v1.2h-1.3zM202.85 129.90h1.3v1.2h-1.3zM192.85 140.90h1.3v1.2h-1.3zM199.85 188.90h1.3v1.2h-1.3zM233.85 178.90h1.3v1.2h-1.3zM184.85 225.90h1.3v1.2h-1.3zM170.85 170.90h1.3v1.2h-1.3zM165.85 221.90h1.3v1.2h-1.3zM175.85 224.90h1.3v1.2h-1.3zM217.85 190.90h1.3v1.2h-1.3zM196.85 220.90h1.3v1.2h-1.3zM236.85 169.90h1.3v1.2h-1.3zM204.85 176.90h1.3v1.2h-1.3zM193.85 169.90h1.3v1.2h-1.3zM186.85 204.90h1.3v1.2h-1.3zM215.85 199.90h1.3v1.2h-1.3zM203.85 205.90h1.3v1.2h-1.3zM160.85 182.90h1.3v1.2h-1.3zM217.85 211.90h1.3v1.2h-1.3zM227.85 152.90h1.3v1.2h-1.3zM176.85 148.90h1.3v1.2h-1.3zM178.85 188.90h1.3v1.2h-1.3zM233.85 167.90h1.3v1.2h-1.3zM164.85 129.90h1.3v1.2h-1.3zM185.85 128.90h1.3v1.2h-1.3zM193.85 203.90h1.3v1.2h-1.3zM161.85 236.90h1.3v1.2h-1.3zM216.85 168.90h1.3v1.2h-1.3zM175.85 186.90h1.3v1.2h-1.3zM231.85 188.90h1.3v1.2h-1.3zM204.85 152.90h1.3v1.2h-1.3zM185.85 181.90h1.3v1.2h-1.3zM237.85 158.90h1.3v1.2h-1.3zM179.85 213.90h1.3v1.2h-1.3zM237.85 154.90h1.3v1.2h-1.3zM184.85 175.90h1.3v1.2h-1.3zM165.85 137.90h1.3v1.2h-1.3zM205.85 155.90h1.3v1.2h-1.3zM179.85 220.90h1.3v1.2h-1.3zM200.85 192.90h1.3v1.2h-1.3zM214.85 213.90h1.3v1.2h-1.3zM169.85 213.90h1.3v1.2h-1.3zM162.85 140.90h1.3v1.2h-1.3zM181.85 141.90h1.3v1.2h-1.3zM172.85 153.90h1.3v1.2h-1.3zM201.85 190.90h1.3v1.2h-1.3zM221.85 195.90h1.3v1.2h-1.3zM166.85 180.90h1.3v1.2h-1.3zM177.85 181.90h1.3v1.2h-1.3zM186.85 194.90h1.3v1.2h-1.3zM214.85 162.90h1.3v1.2h-1.3zM192.85 184.90h1.3v1.2h-1.3zM233.85 191.90h1.3v1.2h-1.3zM235.85 172.90h1.3v1.2h-1.3zM213.85 129.90h1.3v1.2h-1.3zM178.85 202.90h1.3v1.2h-1.3zM187.85 187.90h1.3v1.2h-1.3zM215.85 192.90h1.3v1.2h-1.3zM191.85 129.90h1.3v1.2h-1.3zM195.85 175.90h1.3v1.2h-1.3zM177.85 176.90h1.3v1.2h-1.3zM166.85 236.90h1.3v1.2h-1.3zM203.85 160.90h1.3v1.2h-1.3zM205.85 195.90h1.3v1.2h-1.3zM192.85 221.90h1.3v1.2h-1.3zM223.85 207.90h1.3v1.2h-1.3zM173.85 208.90h1.3v1.2h-1.3zM164.85 159.90h1.3v1.2h-1.3zM160.85 204.90h1.3v1.2h-1.3zM214.85 189.90h1.3v1.2h-1.3zM220.85 190.90h1.3v1.2h-1.3zM226.85 144.90h1.3v1.2h-1.3zM199.85 200.90h1.3v1.2h-1.3zM166.85 192.90h1.3v1.2h-1.3zM220.85 210.90h1.3v1.2h-1.3zM212.85 196.90h1.3v1.2h-1.3zM199.85 177.90h1.3v1.2h-1.3zM209.85 166.90h1.3v1.2h-1.3zM225.85 190.90h1.3v1.2h-1.3zM196.85 186.90h1.3v1.2h-1.3zM180.85 126.90h1.3v1.2h-1.3zM170.85 136.90h1.3v1.2h-1.3zM202.85 135.90h1.3v1.2h-1.3zM199.85 214.90h1.3v1.2h-1.3zM196.85 228.90h1.3v1.2h-1.3zM189.85 183.90h1.3v1.2h-1.3zM182.85 141.90h1.3v1.2h-1.3zM207.85 140.90h1.3v1.2h-1.3zM172.85 160.90h1.3v1.2h-1.3zM178.85 154.90h1.3v1.2h-1.3zM214.85 155.90h1.3v1.2h-1.3zM160.85 239.90h1.3v1.2h-1.3zM213.85 153.90h1.3v1.2h-1.3zM199.85 161.90h1.3v1.2h-1.3zM224.85 173.90h1.3v1.2h-1.3zM167.85 230.90h1.3v1.2h-1.3zM187.85 146.90h1.3v1.2h-1.3zM217.85 141.90h1.3v1.2h-1.3zM210.85 178.90h1.3v1.2h-1.3zM170.85 238.90h1.3v1.2h-1.3zM217.85 133.90h1.3v1.2h-1.3zM174.85 163.90h1.3v1.2h-1.3zM174.85 221.90h1.3v1.2h-1.3zM203.85 178.90h1.3v1.2h-1.3zM170.85 148.90h1.3v1.2h-1.3zM230.85 129.90h1.3v1.2h-1.3zM176.85 188.90h1.3v1.2h-1.3zM179.85 171.90h1.3v1.2h-1.3zM162.85 204.90h1.3v1.2h-1.3zM166.85 160.90h1.3v1.2h-1.3zM168.85 207.90h1.3v1.2h-1.3zM178.85 191.90h1.3v1.2h-1.3zM163.85 192.90h1.3v1.2h-1.3zM188.85 232.90h1.3v1.2h-1.3zM176.85 161.90h1.3v1.2h-1.3zM231.85 133.90h1.3v1.2h-1.3zM200.85 183.90h1.3v1.2h-1.3zM184.85 146.90h1.3v1.2h-1.3zM201.85 129.90h1.3v1.2h-1.3zM161.85 159.90h1.3v1.2h-1.3zM191.85 156.90h1.3v1.2h-1.3zM218.85 175.90h1.3v1.2h-1.3zM210.85 195.90h1.3v1.2h-1.3zM206.85 207.90h1.3v1.2h-1.3zM206.85 135.90h1.3v1.2h-1.3zM228.85 188.90h1.3v1.2h-1.3zM163.85 213.90h1.3v1.2h-1.3zM194.85 181.90h1.3v1.2h-1.3zM223.85 178.90h1.3v1.2h-1.3zM195.85 212.90h1.3v1.2h-1.3zM234.85 180.90h1.3v1.2h-1.3zM218.85 192.90h1.3v1.2h-1.3zM205.85 151.90h1.3v1.2h-1.3zM183.85 156.90h1.3v1.2h-1.3zM178.85 150.90h1.3v1.2h-1.3zM185.85 138.90h1.3v1.2h-1.3zM215.85 213.90h1.3v1.2h-1.3zM209.85 129.90h1.3v1.2h-1.3zM174.85 171.90h1.3v1.2h-1.3zM227.85 149.90h1.3v1.2h-1.3zM168.85 146.90h1.3v1.2h-1.3zM226.85 146.90h1.3v1.2h-1.3zM189.85 218.90h1.3v1.2h-1.3zM228.85 173.90h1.3v1.2h-1.3zM194.85 207.90h1.3v1.2h-1.3zM188.85 154.90h1.3v1.2h-1.3zM175.85 198.90h1.3v1.2h-1.3zM219.85 152.90h1.3v1.2h-1.3zM221.85 197.90h1.3v1.2h-1.3zM207.85 188.90h1.3v1.2h-1.3zM194.85 128.90h1.3v1.2h-1.3zM204.85 203.90h1.3v1.2h-1.3zM213.85 145.90h1.3v1.2h-1.3zM230.85 174.90h1.3v1.2h-1.3zM167.85 132.90h1.3v1.2h-1.3zM164.85 205.90h1.3v1.2h-1.3zM200.85 199.90h1.3v1.2h-1.3zM187.85 195.90h1.3v1.2h-1.3zM168.85 150.90h1.3v1.2h-1.3zM220.85 153.90h1.3v1.2h-1.3zM169.85 202.90h1.3v1.2h-1.3zM161.85 144.90h1.3v1.2h-1.3zM208.85 188.90h1.3v1.2h-1.3zM229.85 130.90h1.3v1.2h-1.3zM211.85 134.90h1.3v1.2h-1.3zM222.85 136.90h1.3v1.2h-1.3zM200.85 216.90h1.3v1.2h-1.3zM224.85 161.90h1.3v1.2h-1.3zM212.85 189.90h1.3v1.2h-1.3zM201.85 196.90h1.3v1.2h-1.3zM196.85 170.90h1.3v1.2h-1.3zM226.85 139.90h1.3v1.2h-1.3zM176.85 127.90h1.3v1.2h-1.3zM188.85 196.90h1.3v1.2h-1.3zM212.85 207.90h1.3v1.2h-1.3zM234.85 169.90h1.3v1.2h-1.3zM201.85 179.90h1.3v1.2h-1.3zM162.85 216.90h1.3v1.2h-1.3zM169.85 184.90h1.3v1.2h-1.3zM212.85 135.90h1.3v1.2h-1.3zM207.85 207.90h1.3v1.2h-1.3zM189.85 189.90h1.3v1.2h-1.3zM192.85 144.90h1.3v1.2h-1.3zM181.85 236.90h1.3v1.2h-1.3zM222.85 173.90h1.3v1.2h-1.3zM204.85 164.90h1.3v1.2h-1.3zM165.85 234.90h1.3v1.2h-1.3zM230.85 162.90h1.3v1.2h-1.3zM172.85 178.90h1.3v1.2h-1.3zM212.85 219.90h1.3v1.2h-1.3zM164.85 181.90h1.3v1.2h-1.3zM189.85 129.90h1.3v1.2h-1.3zM163.85 197.90h1.3v1.2h-1.3zM177.85 159.90h1.3v1.2h-1.3zM189.85 127.90h1.3v1.2h-1.3zM186.85 162.90h1.3v1.2h-1.3zM169.85 137.90h1.3v1.2h-1.3zM193.85 136.90h1.3v1.2h-1.3zM237.85 156.90h1.3v1.2h-1.3zM190.85 133.90h1.3v1.2h-1.3zM227.85 148.90h1.3v1.2h-1.3zM166.85 169.90h1.3v1.2h-1.3zM198.85 194.90h1.3v1.2h-1.3zM166.85 232.90h1.3v1.2h-1.3zM222.85 155.90h1.3v1.2h-1.3zM229.85 145.90h1.3v1.2h-1.3zM200.85 160.90h1.3v1.2h-1.3zM207.85 155.90h1.3v1.2h-1.3zM161.85 139.90h1.3v1.2h-1.3zM225.85 178.90h1.3v1.2h-1.3zM202.85 203.90h1.3v1.2h-1.3zM181.85 148.90h1.3v1.2h-1.3zM193.85 214.90h1.3v1.2h-1.3zM220.85 180.90h1.3v1.2h-1.3zM210.85 156.90h1.3v1.2h-1.3zM226.85 169.90h1.3v1.2h-1.3zM207.85 209.90h1.3v1.2h-1.3zM204.85 215.90h1.3v1.2h-1.3zM182.85 218.90h1.3v1.2h-1.3zM172.85 173.90h1.3v1.2h-1.3zM175.85 189.90h1.3v1.2h-1.3zM214.85 206.90h1.3v1.2h-1.3zM209.85 144.90h1.3v1.2h-1.3zM205.85 159.90h1.3v1.2h-1.3zM160.85 185.90h1.3v1.2h-1.3zM222.85 199.90h1.3v1.2h-1.3zM163.85 190.90h1.3v1.2h-1.3zM184.85 232.90h1.3v1.2h-1.3zM230.85 194.90h1.3v1.2h-1.3zM198.85 188.90h1.3v1.2h-1.3zM186.85 226.90h1.3v1.2h-1.3zM188.85 177.90h1.3v1.2h-1.3zM210.85 162.90h1.3v1.2h-1.3zM210.85 132.90h1.3v1.2h-1.3zM231.85 138.90h1.3v1.2h-1.3zM175.85 192.90h1.3v1.2h-1.3zM165.85 213.90h1.3v1.2h-1.3zM225.85 151.90h1.3v1.2h-1.3zM196.85 137.90h1.3v1.2h-1.3zM215.85 208.90h1.3v1.2h-1.3zM165.85 198.90h1.3v1.2h-1.3zM232.85 147.90h1.3v1.2h-1.3zM234.85 158.90h1.3v1.2h-1.3zM161.85 136.90h1.3v1.2h-1.3zM222.85 149.90h1.3v1.2h-1.3zM230.85 177.90h1.3v1.2h-1.3zM167.85 222.90h1.3v1.2h-1.3zM187.85 141.90h1.3v1.2h-1.3zM160.85 161.90h1.3v1.2h-1.3zM198.85 184.90h1.3v1.2h-1.3zM208.85 135.90h1.3v1.2h-1.3z" fill="#ff1010" fill-opacity="0.9"/>
  <path d="M159.85 10.90h1.3v1.2h-1.3zM156.85 9.90h1.3v1.2h-1.3zM155.85 10.90h1.3v1.2h-1.3zM152.85 9.90h1.3v1.2h-1.3zM151.85 11.90h1.3v1.2h-1.3zM150.85 12.90h1.3v1.2h-1.3zM145.85 12.90h1.3v1.2h-1.3zM145.85 14.90h1.3v1.2h-1.3zM143.85 16.90h1.3v1.2h-1.3zM141.85 17.90h1.3v1.2h-1.3zM138.85 18.90h1.3v1.2h-1.3zM137.85 19.90h1.3v1.2h-1.3zM139.85 21.90h1.3v1.2h-1.3zM134.85 22.90h1.3v1.2h-1.3zM132.85 25.90h1.3v1.2h-1.3zM129.85 27.90h1.3v1.2h-1.3zM130.85 27.90h1.3v1.2h-1.3zM127.85 30.90h1.3v1.2h-1.3zM126.85 29.90h1.3v1.2h-1.3zM122.85 29.90h1.3v1.2h-1.3zM122.85 32.90h1.3v1.2h-1.3zM120.85 33.90h1.3v1.2h-1.3zM119.85 36.90h1.3v1.2h-1.3zM117.85 39.90h1.3v1.2h-1.3zM116.85 41.90h1.3v1.2h-1.3zM114.85 41.90h1.3v1.2h-1.3zM113.85 43.90h1.3v1.2h-1.3zM111.85 44.90h1.3v1.2h-1.3zM109.85 48.90h1.3v1.2h-1.3zM153.85 9.90h1.3v1.2h-1.3zM154.85 10.90h1.3v1.2h-1.3zM153.85 10.90h1.3v1.2h-1.3zM155.85 9.90h1.3v1.2h-1.3zM148.85 10.90h1.3v1.2h-1.3zM151.85 9.90h1.3v1.2h-1.3zM158.85 10.90h1.3v1.2h-1.3zM156.85 10.90h1.3v1.2h-1.3zM160.85 9.90h1.3v1.2h-1.3zM154.85 9.90h1.3v1.2h-1.3zM142.85 19.90h1.3v1.2h-1.3zM142.85 20.90h1.3v1.2h-1.3zM142.85 17.90h1.3v1.2h-1.3zM142.85 18.90h1.3v1.2h-1.3zM143.85 18.90h1.3v1.2h-1.3zM141.85 18.90h1.3v1.2h-1.3zM118.85 13.90h1.3v1.2h-1.3zM121.85 13.90h1.3v1.2h-1.3zM119.85 17.90h1.3v1.2h-1.3zM115.85 22.90h1.3v1.2h-1.3zM124.85 23.90h1.3v1.2h-1.3zM126.85 17.90h1.3v1.2h-1.3zM120.85 24.90h1.3v1.2h-1.3zM118.85 16.90h1.3v1.2h-1.3zM125.85 28.90h1.3v1.2h-1.3zM129.85 32.90h1.3v1.2h-1.3zM132.85 37.90h1.3v1.2h-1.3zM136.85 41.90h1.3v1.2h-1.3zM137.85 44.90h1.3v1.2h-1.3zM138.85 50.90h1.3v1.2h-1.3zM141.85 54.90h1.3v1.2h-1.3zM146.85 58.90h1.3v1.2h-1.3zM144.85 64.90h1.3v1.2h-1.3zM144.85 68.90h1.3v1.2h-1.3zM146.85 71.90h1.3v1.2h-1.3zM146.85 76.90h1.3v1.2h-1.3zM146.85 81.90h1.3v1.2h-1.3zM144.85 22.90h1.3v1.2h-1.3zM145.85 25.90h1.3v1.2h-1.3zM148.85 28.90h1.3v1.2h-1.3zM149.85 31.90h1.3v1.2h-1.3zM151.85 37.90h1.3v1.2h-1.3zM154.85 39.90h1.3v1.2h-1.3zM156.85 17.90h1.3v1.2h-1.3zM158.85 22.90h1.3v1.2h-1.3zM159.85 48.90h1.3v1.2h-1.3zM159.85 56.90h1.3v1.2h-1.3zM91.85 32.90h1.3v1.2h-1.3zM103.85 27.90h1.3v1.2h-1.3zM119.85 52.90h1.3v1.2h-1.3zM120.85 67.90h1.3v1.2h-1.3zM121.85 40.90h1.3v1.2h-1.3zM79.85 42.90h1.3v1.2h-1.3zM85.85 46.90h1.3v1.2h-1.3zM29.85 111.90h1.3v1.2h-1.3zM26.85 119.90h1.3v1.2h-1.3zM90.85 52.90h1.3v1.2h-1.3zM89.85 50.90h1.3v1.2h-1.3zM86.85 48.90h1.3v1.2h-1.3zM85.85 47.90h1.3v1.2h-1.3zM81.85 48.90h1.3v1.2h-1.3zM80.85 50.90h1.3v1.2h-1.3zM76.85 51.90h1.3v1.2h-1.3zM73.85 52.90h1.3v1.2h-1.3zM71.85 53.90h1.3v1.2h-1.3zM67.85 53.90h1.3v1.2h-1.3zM64.85 56.90h1.3v1.2h-1.3zM64.85 59.90h1.3v1.2h-1.3zM61.85 61.90h1.3v1.2h-1.3zM59.85 62.90h1.3v1.2h-1.3zM57.85 64.90h1.3v1.2h-1.3zM52.85 68.90h1.3v1.2h-1.3zM52.85 69.90h1.3v1.2h-1.3zM51.85 73.90h1.3v1.2h-1.3zM51.85 76.90h1.3v1.2h-1.3zM47.85 78.90h1.3v1.2h-1.3zM45.85 81.90h1.3v1.2h-1.3zM41.85 83.90h1.3v1.2h-1.3zM42.85 86.90h1.3v1.2h-1.3zM43.85 90.90h1.3v1.2h-1.3zM39.85 93.90h1.3v1.2h-1.3zM39.85 94.90h1.3v1.2h-1.3zM37.85 95.90h1.3v1.2h-1.3zM32.85 95.90h1.3v1.2h-1.3zM34.85 98.90h1.3v1.2h-1.3zM35.85 99.90h1.3v1.2h-1.3zM36.85 102.90h1.3v1.2h-1.3zM35.85 107.90h1.3v1.2h-1.3zM36.85 111.90h1.3v1.2h-1.3zM34.85 113.90h1.3v1.2h-1.3zM34.85 116.90h1.3v1.2h-1.3zM36.85 119.90h1.3v1.2h-1.3zM33.85 123.90h1.3v1.2h-1.3zM84.85 68.90h1.3v1.2h-1.3zM90.85 70.90h1.3v1.2h-1.3zM82.85 74.90h1.3v1.2h-1.3zM89.85 65.90h1.3v1.2h-1.3zM86.85 68.90h1.3v1.2h-1.3zM83.85 71.90h1.3v1.2h-1.3zM89.85 64.90h1.3v1.2h-1.3zM87.85 70.90h1.3v1.2h-1.3zM83.85 59.90h1.3v1.2h-1.3zM90.85 74.90h1.3v1.2h-1.3zM89.85 68.90h1.3v1.2h-1.3zM88.85 75.90h1.3v1.2h-1.3zM86.85 72.90h1.3v1.2h-1.3zM86.85 65.90h1.3v1.2h-1.3zM87.85 64.90h1.3v1.2h-1.3zM85.85 67.90h1.3v1.2h-1.3zM88.85 74.90h1.3v1.2h-1.3zM85.85 69.90h1.3v1.2h-1.3zM85.85 71.90h1.3v1.2h-1.3zM88.85 70.90h1.3v1.2h-1.3zM85.85 61.90h1.3v1.2h-1.3zM83.85 65.90h1.3v1.2h-1.3zM84.85 60.90h1.3v1.2h-1.3zM88.85 76.90h1.3v1.2h-1.3zM89.85 56.90h1.3v1.2h-1.3zM92.85 67.90h1.3v1.2h-1.3zM87.85 63.90h1.3v1.2h-1.3zM91.85 73.90h1.3v1.2h-1.3zM84.85 72.90h1.3v1.2h-1.3zM89.85 71.90h1.3v1.2h-1.3zM87.85 66.90h1.3v1.2h-1.3zM92.85 60.90h1.3v1.2h-1.3zM89.85 72.90h1.3v1.2h-1.3zM87.85 61.90h1.3v1.2h-1.3zM88.85 68.90h1.3v1.2h-1.3zM90.85 64.90h1.3v1.2h-1.3zM84.85 62.90h1.3v1.2h-1.3zM88.85 65.90h1.3v1.2h-1.3zM88.85 69.90h1.3v1.2h-1.3zM92.85 62.90h1.3v1.2h-1.3zM88.85 63.90h1.3v1.2h-1.3zM89.85 61.90h1.3v1.2h-1.3zM87.85 60.90h1.3v1.2h-1.3zM85.85 64.90h1.3v1.2h-1.3zM85.85 65.90h1.3v1.2h-1.3zM90.85 63.90h1.3v1.2h-1.3zM88.85 61.90h1.3v1.2h-1.3zM84.85 64.90h1.3v1.2h-1.3zM86.85 64.90h1.3v1.2h-1.3zM88.85 66.90h1.3v1.2h-1.3zM91.85 63.90h1.3v1.2h-1.3zM88.85 57.90h1.3v1.2h-1.3zM89.85 59.90h1.3v1.2h-1.3zM81.85 62.90h1.3v1.2h-1.3zM88.85 60.90h1.3v1.2h-1.3zM90.85 60.90h1.3v1.2h-1.3zM88.85 56.90h1.3v1.2h-1.3zM83.85 67.90h1.3v1.2h-1.3zM87.85 57.90h1.3v1.2h-1.3zM84.85 66.90h1.3v1.2h-1.3zM86.85 61.90h1.3v1.2h-1.3zM90.85 61.90h1.3v1.2h-1.3zM80.85 72.90h1.3v1.2h-1.3zM85.85 58.90h1.3v1.2h-1.3zM87.85 53.90h1.3v1.2h-1.3zM86.85 63.90h1.3v1.2h-1.3zM88.85 64.90h1.3v1.2h-1.3zM89.85 60.90h1.3v1.2h-1.3zM82.85 62.90h1.3v1.2h-1.3zM81.85 58.90h1.3v1.2h-1.3zM87.85 62.90h1.3v1.2h-1.3zM88.85 62.90h1.3v1.2h-1.3zM84.85 63.90h1.3v1.2h-1.3zM92.85 66.90h1.3v1.2h-1.3zM85.85 62.90h1.3v1.2h-1.3zM89.85 63.90h1.3v1.2h-1.3zM87.85 59.90h1.3v1.2h-1.3zM90.85 59.90h1.3v1.2h-1.3zM93.85 66.90h1.3v1.2h-1.3zM82.85 64.90h1.3v1.2h-1.3zM87.85 67.90h1.3v1.2h-1.3zM81.85 65.90h1.3v1.2h-1.3zM88.85 58.90h1.3v1.2h-1.3zM89.85 66.90h1.3v1.2h-1.3zM86.85 59.90h1.3v1.2h-1.3zM80.85 60.90h1.3v1.2h-1.3zM86.85 60.90h1.3v1.2h-1.3zM87.85 68.90h1.3v1.2h-1.3zM84.85 65.90h1.3v1.2h-1.3zM85.85 68.90h1.3v1.2h-1.3zM90.85 67.90h1.3v1.2h-1.3zM87.85 69.90h1.3v1.2h-1.3zM89.85 62.90h1.3v1.2h-1.3zM84.85 61.90h1.3v1.2h-1.3zM86.85 69.90h1.3v1.2h-1.3zM91.85 60.90h1.3v1.2h-1.3zM86.85 66.90h1.3v1.2h-1.3zM90.85 72.90h1.3v1.2h-1.3zM94.85 72.90h1.3v1.2h-1.3zM96.85 72.90h1.3v1.2h-1.3zM99.85 73.90h1.3v1.2h-1.3zM100.85 72.90h1.3v1.2h-1.3zM105.85 74.90h1.3v1.2h-1.3zM107.85 74.90h1.3v1.2h-1.3zM108.85 73.90h1.3v1.2h-1.3zM112.85 73.90h1.3v1.2h-1.3zM113.85 74.90h1.3v1.2h-1.3zM117.85 76.90h1.3v1.2h-1.3zM120.85 77.90h1.3v1.2h-1.3zM121.85 76.90h1.3v1.2h-1.3zM123.85 79.90h1.3v1.2h-1.3zM125.85 79.90h1.3v1.2h-1.3zM128.85 80.90h1.3v1.2h-1.3zM127.85 82.90h1.3v1.2h-1.3zM131.85 84.90h1.3v1.2h-1.3zM131.85 85.90h1.3v1.2h-1.3zM134.85 87.90h1.3v1.2h-1.3zM134.85 91.90h1.3v1.2h-1.3zM136.85 93.90h1.3v1.2h-1.3zM137.85 98.90h1.3v1.2h-1.3zM95.85 55.90h1.3v1.2h-1.3zM96.85 58.90h1.3v1.2h-1.3zM100.85 62.90h1.3v1.2h-1.3zM100.85 66.90h1.3v1.2h-1.3zM103.85 68.90h1.3v1.2h-1.3zM103.85 64.90h1.3v1.2h-1.3zM107.85 57.90h1.3v1.2h-1.3zM96.85 76.90h1.3v1.2h-1.3zM96.85 80.90h1.3v1.2h-1.3zM93.85 83.90h1.3v1.2h-1.3zM93.85 96.90h1.3v1.2h-1.3zM114.85 96.90h1.3v1.2h-1.3zM118.85 85.90h1.3v1.2h-1.3zM119.85 89.90h1.3v1.2h-1.3zM67.85 79.90h1.3v1.2h-1.3zM63.85 82.90h1.3v1.2h-1.3zM62.85 85.90h1.3v1.2h-1.3zM53.85 92.90h1.3v1.2h-1.3zM53.85 95.90h1.3v1.2h-1.3zM48.85 99.90h1.3v1.2h-1.3zM45.85 103.90h1.3v1.2h-1.3zM44.85 104.90h1.3v1.2h-1.3zM42.85 108.90h1.3v1.2h-1.3zM42.85 110.90h1.3v1.2h-1.3zM41.85 114.90h1.3v1.2h-1.3zM39.85 118.90h1.3v1.2h-1.3zM86.85 97.90h1.3v1.2h-1.3zM84.85 99.90h1.3v1.2h-1.3zM83.85 103.90h1.3v1.2h-1.3zM81.85 110.90h1.3v1.2h-1.3zM81.85 113.90h1.3v1.2h-1.3zM82.85 118.90h1.3v1.2h-1.3zM83.85 122.90h1.3v1.2h-1.3zM218.85 23.90h1.3v1.2h-1.3zM221.85 24.90h1.3v1.2h-1.3zM225.85 25.90h1.3v1.2h-1.3zM227.85 26.90h1.3v1.2h-1.3zM231.85 28.90h1.3v1.2h-1.3zM234.85 29.90h1.3v1.2h-1.3zM237.85 30.90h1.3v1.2h-1.3zM241.85 33.90h1.3v1.2h-1.3zM244.85 35.90h1.3v1.2h-1.3zM248.85 38.90h1.3v1.2h-1.3zM249.85 41.90h1.3v1.2h-1.3zM252.85 43.90h1.3v1.2h-1.3zM252.85 45.90h1.3v1.2h-1.3zM255.85 48.90h1.3v1.2h-1.3zM260.85 48.90h1.3v1.2h-1.3zM261.85 53.90h1.3v1.2h-1.3zM264.85 53.90h1.3v1.2h-1.3zM266.85 57.90h1.3v1.2h-1.3zM268.85 58.90h1.3v1.2h-1.3zM272.85 58.90h1.3v1.2h-1.3zM275.85 60.90h1.3v1.2h-1.3zM277.85 61.90h1.3v1.2h-1.3zM278.85 64.90h1.3v1.2h-1.3zM280.85 66.90h1.3v1.2h-1.3zM284.85 67.90h1.3v1.2h-1.3zM284.85 73.90h1.3v1.2h-1.3zM287.85 72.90h1.3v1.2h-1.3zM292.85 73.90h1.3v1.2h-1.3zM289.85 76.90h1.3v1.2h-1.3zM289.85 80.90h1.3v1.2h-1.3zM292.85 81.90h1.3v1.2h-1.3zM295.85 81.90h1.3v1.2h-1.3zM297.85 84.90h1.3v1.2h-1.3zM298.85 87.90h1.3v1.2h-1.3zM297.85 89.90h1.3v1.2h-1.3zM300.85 94.90h1.3v1.2h-1.3zM306.85 99.90h1.3v1.2h-1.3zM300.85 97.90h1.3v1.2h-1.3zM301.85 101.90h1.3v1.2h-1.3zM304.85 103.90h1.3v1.2h-1.3zM303.85 100.90h1.3v1.2h-1.3zM304.85 91.90h1.3v1.2h-1.3zM306.85 94.90h1.3v1.2h-1.3zM301.85 100.90h1.3v1.2h-1.3zM301.85 93.90h1.3v1.2h-1.3zM305.85 96.90h1.3v1.2h-1.3zM302.85 101.90h1.3v1.2h-1.3zM304.85 100.90h1.3v1.2h-1.3zM307.85 98.90h1.3v1.2h-1.3zM310.85 95.90h1.3v1.2h-1.3zM307.85 101.90h1.3v1.2h-1.3zM300.85 102.90h1.3v1.2h-1.3zM305.85 98.90h1.3v1.2h-1.3zM304.85 96.90h1.3v1.2h-1.3zM306.85 98.90h1.3v1.2h-1.3zM303.85 87.90h1.3v1.2h-1.3zM306.85 100.90h1.3v1.2h-1.3zM302.85 98.90h1.3v1.2h-1.3zM303.85 103.90h1.3v1.2h-1.3zM305.85 95.90h1.3v1.2h-1.3zM302.85 99.90h1.3v1.2h-1.3zM305.85 90.90h1.3v1.2h-1.3zM302.85 100.90h1.3v1.2h-1.3zM301.85 96.90h1.3v1.2h-1.3zM305.85 99.90h1.3v1.2h-1.3zM306.85 97.90h1.3v1.2h-1.3zM304.85 99.90h1.3v1.2h-1.3zM302.85 97.90h1.3v1.2h-1.3zM304.85 98.90h1.3v1.2h-1.3zM308.85 99.90h1.3v1.2h-1.3zM305.85 100.90h1.3v1.2h-1.3zM305.85 97.90h1.3v1.2h-1.3zM306.85 95.90h1.3v1.2h-1.3zM301.85 99.90h1.3v1.2h-1.3zM302.85 96.90h1.3v1.2h-1.3zM303.85 96.90h1.3v1.2h-1.3zM308.85 95.90h1.3v1.2h-1.3zM304.85 95.90h1.3v1.2h-1.3zM304.85 97.90h1.3v1.2h-1.3zM305.85 103.90h1.3v1.2h-1.3zM305.85 93.90h1.3v1.2h-1.3zM308.85 101.90h1.3v1.2h-1.3zM303.85 95.90h1.3v1.2h-1.3zM303.85 102.90h1.3v1.2h-1.3zM303.85 101.90h1.3v1.2h-1.3zM305.85 101.90h1.3v1.2h-1.3zM302.85 92.90h1.3v1.2h-1.3zM301.85 103.90h1.3v1.2h-1.3zM307.85 94.90h1.3v1.2h-1.3zM306.85 108.90h1.3v1.2h-1.3zM303.85 111.90h1.3v1.2h-1.3zM304.85 116.90h1.3v1.2h-1.3zM307.85 117.90h1.3v1.2h-1.3zM311.85 121.90h1.3v1.2h-1.3zM161.85 9.90h1.3v1.2h-1.3zM164.85 9.90h1.3v1.2h-1.3zM163.85 9.90h1.3v1.2h-1.3zM163.85 7.90h1.3v1.2h-1.3zM161.85 10.90h1.3v1.2h-1.3zM166.85 11.90h1.3v1.2h-1.3zM162.85 9.90h1.3v1.2h-1.3zM166.85 9.90h1.3v1.2h-1.3zM207.85 9.90h1.3v1.2h-1.3zM210.85 11.90h1.3v1.2h-1.3zM207.85 16.90h1.3v1.2h-1.3zM173.85 10.90h1.3v1.2h-1.3zM175.85 18.90h1.3v1.2h-1.3zM179.85 14.90h1.3v1.2h-1.3zM183.85 15.90h1.3v1.2h-1.3zM181.85 22.90h1.3v1.2h-1.3zM185.85 23.90h1.3v1.2h-1.3zM172.85 29.90h1.3v1.2h-1.3zM179.85 29.90h1.3v1.2h-1.3zM185.85 31.90h1.3v1.2h-1.3zM188.85 29.90h1.3v1.2h-1.3zM193.85 29.90h1.3v1.2h-1.3zM198.85 28.90h1.3v1.2h-1.3zM201.85 23.90h1.3v1.2h-1.3zM206.85 22.90h1.3v1.2h-1.3zM208.85 28.90h1.3v1.2h-1.3zM214.85 31.90h1.3v1.2h-1.3zM219.85 30.90h1.3v1.2h-1.3zM215.85 27.90h1.3v1.2h-1.3zM195.85 44.90h1.3v1.2h-1.3zM199.85 51.90h1.3v1.2h-1.3zM200.85 54.90h1.3v1.2h-1.3zM204.85 57.90h1.3v1.2h-1.3zM206.85 52.90h1.3v1.2h-1.3zM203.85 62.90h1.3v1.2h-1.3zM205.85 66.90h1.3v1.2h-1.3zM209.85 64.90h1.3v1.2h-1.3zM210.85 72.90h1.3v1.2h-1.3zM210.85 76.90h1.3v1.2h-1.3zM213.85 78.90h1.3v1.2h-1.3zM218.85 58.90h1.3v1.2h-1.3zM219.85 78.90h1.3v1.2h-1.3zM214.85 57.90h1.3v1.2h-1.3zM207.85 41.90h1.3v1.2h-1.3zM205.85 43.90h1.3v1.2h-1.3zM211.85 37.90h1.3v1.2h-1.3zM201.85 37.90h1.3v1.2h-1.3zM190.85 36.90h1.3v1.2h-1.3zM187.85 45.90h1.3v1.2h-1.3zM171.85 52.90h1.3v1.2h-1.3zM175.85 56.90h1.3v1.2h-1.3zM179.85 52.90h1.3v1.2h-1.3zM182.85 51.90h1.3v1.2h-1.3zM186.85 52.90h1.3v1.2h-1.3zM178.85 60.90h1.3v1.2h-1.3zM182.85 66.90h1.3v1.2h-1.3zM186.85 72.90h1.3v1.2h-1.3zM187.85 78.90h1.3v1.2h-1.3zM194.85 73.90h1.3v1.2h-1.3zM195.85 63.90h1.3v1.2h-1.3zM190.85 84.90h1.3v1.2h-1.3zM194.85 84.90h1.3v1.2h-1.3zM200.85 86.90h1.3v1.2h-1.3zM204.85 93.90h1.3v1.2h-1.3zM210.85 92.90h1.3v1.2h-1.3zM215.85 93.90h1.3v1.2h-1.3zM224.85 87.90h1.3v1.2h-1.3zM225.85 93.90h1.3v1.2h-1.3zM226.85 97.90h1.3v1.2h-1.3zM223.85 48.90h1.3v1.2h-1.3zM231.85 52.90h1.3v1.2h-1.3zM237.85 57.90h1.3v1.2h-1.3zM243.85 61.90h1.3v1.2h-1.3zM248.85 65.90h1.3v1.2h-1.3zM249.85 69.90h1.3v1.2h-1.3zM243.85 67.90h1.3v1.2h-1.3zM234.85 67.90h1.3v1.2h-1.3zM229.85 64.90h1.3v1.2h-1.3zM225.85 72.90h1.3v1.2h-1.3zM227.85 78.90h1.3v1.2h-1.3zM233.85 78.90h1.3v1.2h-1.3zM237.85 78.90h1.3v1.2h-1.3zM241.85 78.90h1.3v1.2h-1.3zM248.85 79.90h1.3v1.2h-1.3zM250.85 82.90h1.3v1.2h-1.3zM253.85 87.90h1.3v1.2h-1.3zM257.85 90.90h1.3v1.2h-1.3zM261.85 96.90h1.3v1.2h-1.3zM262.85 101.90h1.3v1.2h-1.3zM263.85 108.90h1.3v1.2h-1.3zM262.85 115.90h1.3v1.2h-1.3zM263.85 121.90h1.3v1.2h-1.3zM265.85 86.90h1.3v1.2h-1.3zM272.85 91.90h1.3v1.2h-1.3zM273.85 101.90h1.3v1.2h-1.3zM274.85 106.90h1.3v1.2h-1.3zM279.85 111.90h1.3v1.2h-1.3zM283.85 112.90h1.3v1.2h-1.3zM278.85 115.90h1.3v1.2h-1.3zM257.85 59.90h1.3v1.2h-1.3zM257.85 68.90h1.3v1.2h-1.3zM261.85 66.90h1.3v1.2h-1.3zM250.85 53.90h1.3v1.2h-1.3zM242.85 39.90h1.3v1.2h-1.3zM278.85 72.90h1.3v1.2h-1.3zM276.85 70.90h1.3v1.2h-1.3zM279.85 74.90h1.3v1.2h-1.3zM284.85 72.90h1.3v1.2h-1.3zM287.85 82.90h1.3v1.2h-1.3zM296.85 106.90h1.3v1.2h-1.3zM298.85 109.90h1.3v1.2h-1.3zM228.85 106.90h1.3v1.2h-1.3zM232.85 102.90h1.3v1.2h-1.3zM234.85 111.90h1.3v1.2h-1.3zM251.85 122.90h1.3v1.2h-1.3zM243.85 124.90h1.3v1.2h-1.3zM210.85 39.90h1.3v1.2h-1.3zM171.85 47.90h1.3v1.2h-1.3zM188.85 56.90h1.3v1.2h-1.3zM195.85 34.90h1.3v1.2h-1.3zM187.85 60.90h1.3v1.2h-1.3zM185.85 49.90h1.3v1.2h-1.3zM184.85 55.90h1.3v1.2h-1.3zM217.85 57.90h1.3v1.2h-1.3zM209.85 55.90h1.3v1.2h-1.3zM184.85 42.90h1.3v1.2h-1.3zM197.85 55.90h1.3v1.2h-1.3zM189.85 58.90h1.3v1.2h-1.3zM187.85 48.90h1.3v1.2h-1.3zM196.85 27.90h1.3v1.2h-1.3zM208.85 48.90h1.3v1.2h-1.3zM197.85 46.90h1.3v1.2h-1.3zM171.85 23.90h1.3v1.2h-1.3zM185.85 64.90h1.3v1.2h-1.3zM184.85 32.90h1.3v1.2h-1.3zM190.85 66.90h1.3v1.2h-1.3zM176.85 44.90h1.3v1.2h-1.3zM201.85 49.90h1.3v1.2h-1.3zM196.85 61.90h1.3v1.2h-1.3zM199.85 29.90h1.3v1.2h-1.3zM203.85 33.90h1.3v1.2h-1.3zM192.85 72.90h1.3v1.2h-1.3zM201.85 33.90h1.3v1.2h-1.3zM187.85 76.90h1.3v1.2h-1.3zM200.85 23.90h1.3v1.2h-1.3zM211.85 54.90h1.3v1.2h-1.3zM170.85 34.90h1.3v1.2h-1.3zM194.85 44.90h1.3v1.2h-1.3zM214.85 35.90h1.3v1.2h-1.3zM195.85 46.90h1.3v1.2h-1.3zM195.85 29.90h1.3v1.2h-1.3zM200.85 43.90h1.3v1.2h-1.3zM198.85 29.90h1.3v1.2h-1.3zM196.85 30.90h1.3v1.2h-1.3zM184.85 53.90h1.3v1.2h-1.3zM203.85 57.90h1.3v1.2h-1.3zM195.85 40.90h1.3v1.2h-1.3zM212.85 69.90h1.3v1.2h-1.3zM188.85 28.90h1.3v1.2h-1.3zM200.85 53.90h1.3v1.2h-1.3zM185.85 87.90h1.3v1.2h-1.3zM171.85 32.90h1.3v1.2h-1.3zM199.85 64.90h1.3v1.2h-1.3zM174.85 39.90h1.3v1.2h-1.3zM213.85 72.90h1.3v1.2h-1.3zM193.85 48.90h1.3v1.2h-1.3zM185.85 54.90h1.3v1.2h-1.3zM184.85 12.90h1.3v1.2h-1.3zM178.85 48.90h1.3v1.2h-1.3zM180.85 66.90h1.3v1.2h-1.3zM211.85 64.90h1.3v1.2h-1.3zM203.85 67.90h1.3v1.2h-1.3zM263.85 98.90h1.3v1.2h-1.3zM266.85 96.90h1.3v1.2h-1.3zM240.85 66.90h1.3v1.2h-1.3zM240.85 97.90h1.3v1.2h-1.3zM267.85 63.90h1.3v1.2h-1.3zM240.85 67.90h1.3v1.2h-1.3zM274.85 77.90h1.3v1.2h-1.3zM254.85 65.90h1.3v1.2h-1.3zM256.85 113.90h1.3v1.2h-1.3zM245.85 72.90h1.3v1.2h-1.3zM289.85 95.90h1.3v1.2h-1.3zM237.85 103.90h1.3v1.2h-1.3zM235.85 91.90h1.3v1.2h-1.3zM212.85 59.90h1.3v1.2h-1.3zM274.85 67.90h1.3v1.2h-1.3zM245.85 81.90h1.3v1.2h-1.3zM258.85 70.90h1.3v1.2h-1.3zM246.85 117.90h1.3v1.2h-1.3zM285.85 87.90h1.3v1.2h-1.3zM237.85 69.90h1.3v1.2h-1.3zM253.85 90.90h1.3v1.2h-1.3zM287.85 69.90h1.3v1.2h-1.3zM261.85 71.90h1.3v1.2h-1.3zM260.85 65.90h1.3v1.2h-1.3zM265.85 104.90h1.3v1.2h-1.3zM251.85 73.90h1.3v1.2h-1.3zM260.85 52.90h1.3v1.2h-1.3zM251.85 61.90h1.3v1.2h-1.3zM285.85 69.90h1.3v1.2h-1.3zM249.85 119.90h1.3v1.2h-1.3zM256.85 63.90h1.3v1.2h-1.3zM258.85 84.90h1.3v1.2h-1.3zM244.85 76.90h1.3v1.2h-1.3zM254.85 95.90h1.3v1.2h-1.3zM272.85 97.90h1.3v1.2h-1.3zM256.85 96.90h1.3v1.2h-1.3zM254.85 104.90h1.3v1.2h-1.3zM265.85 71.90h1.3v1.2h-1.3zM240.85 63.90h1.3v1.2h-1.3zM256.85 54.90h1.3v1.2h-1.3zM236.85 40.90h1.3v1.2h-1.3zM260.85 63.90h1.3v1.2h-1.3zM297.85 96.90h1.3v1.2h-1.3zM237.85 107.90h1.3v1.2h-1.3zM260.85 102.90h1.3v1.2h-1.3zM238.85 104.90h1.3v1.2h-1.3zM278.85 71.90h1.3v1.2h-1.3zM243.85 72.90h1.3v1.2h-1.3zM263.85 130.90h1.3v1.2h-1.3zM291.85 111.90h1.3v1.2h-1.3zM254.85 73.90h1.3v1.2h-1.3zM265.85 74.90h1.3v1.2h-1.3zM250.85 75.90h1.3v1.2h-1.3zM21.85 145.90h1.3v1.2h-1.3zM20.85 149.90h1.3v1.2h-1.3zM20.85 151.90h1.3v1.2h-1.3zM19.85 153.90h1.3v1.2h-1.3zM19.85 157.90h1.3v1.2h-1.3zM20.85 161.90h1.3v1.2h-1.3zM20.85 164.90h1.3v1.2h-1.3zM21.85 166.90h1.3v1.2h-1.3zM22.85 169.90h1.3v1.2h-1.3zM21.85 172.90h1.3v1.2h-1.3zM21.85 175.90h1.3v1.2h-1.3zM21.85 179.90h1.3v1.2h-1.3zM21.85 183.90h1.3v1.2h-1.3zM20.85 185.90h1.3v1.2h-1.3zM21.85 189.90h1.3v1.2h-1.3zM21.85 192.90h1.3v1.2h-1.3zM21.85 195.90h1.3v1.2h-1.3zM22.85 197.90h1.3v1.2h-1.3zM20.85 201.90h1.3v1.2h-1.3zM19.85 205.90h1.3v1.2h-1.3zM22.85 209.90h1.3v1.2h-1.3zM22.85 212.90h1.3v1.2h-1.3zM24.85 215.90h1.3v1.2h-1.3zM27.85 217.90h1.3v1.2h-1.3zM31.85 222.90h1.3v1.2h-1.3zM31.85 224.90h1.3v1.2h-1.3zM33.85 227.90h1.3v1.2h-1.3zM33.85 230.90h1.3v1.2h-1.3zM36.85 232.90h1.3v1.2h-1.3zM40.85 234.90h1.3v1.2h-1.3zM40.85 237.90h1.3v1.2h-1.3zM42.85 238.90h1.3v1.2h-1.3zM44.85 241.90h1.3v1.2h-1.3zM47.85 243.90h1.3v1.2h-1.3zM48.85 245.90h1.3v1.2h-1.3zM49.85 247.90h1.3v1.2h-1.3zM52.85 249.90h1.3v1.2h-1.3zM55.85 251.90h1.3v1.2h-1.3zM25.85 179.90h1.3v1.2h-1.3zM26.85 188.90h1.3v1.2h-1.3zM27.85 173.90h1.3v1.2h-1.3zM25.85 199.90h1.3v1.2h-1.3zM26.85 192.90h1.3v1.2h-1.3zM21.85 158.90h1.3v1.2h-1.3zM28.85 180.90h1.3v1.2h-1.3zM22.85 191.90h1.3v1.2h-1.3zM25.85 195.90h1.3v1.2h-1.3zM26.85 189.90h1.3v1.2h-1.3zM27.85 174.90h1.3v1.2h-1.3zM24.85 202.90h1.3v1.2h-1.3zM24.85 172.90h1.3v1.2h-1.3zM26.85 184.90h1.3v1.2h-1.3zM24.85 198.90h1.3v1.2h-1.3zM23.85 144.90h1.3v1.2h-1.3zM23.85 161.90h1.3v1.2h-1.3zM22.85 189.90h1.3v1.2h-1.3zM24.85 176.90h1.3v1.2h-1.3zM22.85 177.90h1.3v1.2h-1.3zM24.85 175.90h1.3v1.2h-1.3zM32.85 182.90h1.3v1.2h-1.3zM23.85 184.90h1.3v1.2h-1.3zM27.85 189.90h1.3v1.2h-1.3zM26.85 172.90h1.3v1.2h-1.3zM22.85 176.90h1.3v1.2h-1.3zM25.85 161.90h1.3v1.2h-1.3zM25.85 184.90h1.3v1.2h-1.3zM25.85 171.90h1.3v1.2h-1.3zM25.85 174.90h1.3v1.2h-1.3zM27.85 162.90h1.3v1.2h-1.3zM25.85 156.90h1.3v1.2h-1.3zM25.85 172.90h1.3v1.2h-1.3zM25.85 170.90h1.3v1.2h-1.3zM30.85 180.90h1.3v1.2h-1.3zM24.85 180.90h1.3v1.2h-1.3zM35.85 129.90h1.3v1.2h-1.3zM33.85 132.90h1.3v1.2h-1.3zM31.85 135.90h1.3v1.2h-1.3zM31.85 139.90h1.3v1.2h-1.3zM31.85 141.90h1.3v1.2h-1.3zM30.85 145.90h1.3v1.2h-1.3zM28.85 148.90h1.3v1.2h-1.3zM27.85 149.90h1.3v1.2h-1.3zM29.85 153.90h1.3v1.2h-1.3zM26.85 157.90h1.3v1.2h-1.3zM35.85 130.90h1.3v1.2h-1.3zM36.85 128.90h1.3v1.2h-1.3zM22.85 127.90h1.3v1.2h-1.3zM44.85 164.90h1.3v1.2h-1.3zM50.85 164.90h1.3v1.2h-1.3zM56.85 165.90h1.3v1.2h-1.3zM63.85 167.90h1.3v1.2h-1.3zM70.85 164.90h1.3v1.2h-1.3zM76.85 156.90h1.3v1.2h-1.3zM83.85 151.90h1.3v1.2h-1.3zM83.85 143.90h1.3v1.2h-1.3zM81.85 136.90h1.3v1.2h-1.3zM104.85 225.90h1.3v1.2h-1.3zM101.85 231.90h1.3v1.2h-1.3zM114.85 249.90h1.3v1.2h-1.3zM121.85 249.90h1.3v1.2h-1.3zM129.85 249.90h1.3v1.2h-1.3zM145.85 245.90h1.3v1.2h-1.3zM153.85 248.90h1.3v1.2h-1.3zM82.85 129.90h1.3v1.2h-1.3zM79.85 129.90h1.3v1.2h-1.3zM76.85 127.90h1.3v1.2h-1.3zM72.85 128.90h1.3v1.2h-1.3zM70.85 131.90h1.3v1.2h-1.3zM67.85 131.90h1.3v1.2h-1.3zM64.85 132.90h1.3v1.2h-1.3zM60.85 132.90h1.3v1.2h-1.3zM57.85 134.90h1.3v1.2h-1.3zM54.85 133.90h1.3v1.2h-1.3zM50.85 137.90h1.3v1.2h-1.3zM48.85 136.90h1.3v1.2h-1.3zM45.85 140.90h1.3v1.2h-1.3zM41.85 142.90h1.3v1.2h-1.3zM40.85 143.90h1.3v1.2h-1.3zM37.85 143.90h1.3v1.2h-1.3zM60.85 143.90h1.3v1.2h-1.3zM58.85 143.90h1.3v1.2h-1.3zM53.85 142.90h1.3v1.2h-1.3zM49.85 145.90h1.3v1.2h-1.3zM48.85 148.90h1.3v1.2h-1.3zM45.85 150.90h1.3v1.2h-1.3zM44.85 153.90h1.3v1.2h-1.3zM41.85 156.90h1.3v1.2h-1.3zM39.85 157.90h1.3v1.2h-1.3zM37.85 162.90h1.3v1.2h-1.3zM37.85 166.90h1.3v1.2h-1.3zM36.85 169.90h1.3v1.2h-1.3zM36.85 173.90h1.3v1.2h-1.3zM35.85 176.90h1.3v1.2h-1.3zM37.85 180.90h1.3v1.2h-1.3zM38.85 183.90h1.3v1.2h-1.3zM36.85 186.90h1.3v1.2h-1.3zM36.85 191.90h1.3v1.2h-1.3zM39.85 193.90h1.3v1.2h-1.3zM60.85 144.90h1.3v1.2h-1.3zM63.85 147.90h1.3v1.2h-1.3zM63.85 149.90h1.3v1.2h-1.3zM64.85 151.90h1.3v1.2h-1.3zM64.85 156.90h1.3v1.2h-1.3zM68.85 157.90h1.3v1.2h-1.3zM68.85 160.90h1.3v1.2h-1.3zM70.85 163.90h1.3v1.2h-1.3zM72.85 167.90h1.3v1.2h-1.3zM75.85 170.90h1.3v1.2h-1.3zM75.85 173.90h1.3v1.2h-1.3zM77.85 174.90h1.3v1.2h-1.3zM80.85 174.90h1.3v1.2h-1.3zM82.85 175.90h1.3v1.2h-1.3zM41.85 203.90h1.3v1.2h-1.3zM44.85 200.90h1.3v1.2h-1.3zM51.85 199.90h1.3v1.2h-1.3zM53.85 197.90h1.3v1.2h-1.3zM59.85 199.90h1.3v1.2h-1.3zM59.85 198.90h1.3v1.2h-1.3zM66.85 199.90h1.3v1.2h-1.3zM70.85 200.90h1.3v1.2h-1.3zM74.85 200.90h1.3v1.2h-1.3zM79.85 199.90h1.3v1.2h-1.3zM42.85 202.90h1.3v1.2h-1.3zM42.85 205.90h1.3v1.2h-1.3zM45.85 208.90h1.3v1.2h-1.3zM48.85 211.90h1.3v1.2h-1.3zM50.85 213.90h1.3v1.2h-1.3zM51.85 216.90h1.3v1.2h-1.3zM51.85 208.90h1.3v1.2h-1.3zM55.85 208.90h1.3v1.2h-1.3zM59.85 207.90h1.3v1.2h-1.3zM64.85 206.90h1.3v1.2h-1.3zM67.85 209.90h1.3v1.2h-1.3zM70.85 209.90h1.3v1.2h-1.3zM75.85 210.90h1.3v1.2h-1.3zM78.85 212.90h1.3v1.2h-1.3zM81.85 213.90h1.3v1.2h-1.3zM83.85 214.90h1.3v1.2h-1.3zM86.85 217.90h1.3v1.2h-1.3zM89.85 218.90h1.3v1.2h-1.3zM92.85 219.90h1.3v1.2h-1.3zM94.85 222.90h1.3v1.2h-1.3zM95.85 226.90h1.3v1.2h-1.3zM95.85 229.90h1.3v1.2h-1.3zM92.85 232.90h1.3v1.2h-1.3zM90.85 234.90h1.3v1.2h-1.3zM87.85 239.90h1.3v1.2h-1.3zM85.85 240.90h1.3v1.2h-1.3zM83.85 243.90h1.3v1.2h-1.3zM80.85 244.90h1.3v1.2h-1.3zM78.85 245.90h1.3v1.2h-1.3zM74.85 246.90h1.3v1.2h-1.3zM68.85 247.90h1.3v1.2h-1.3zM66.85 249.90h1.3v1.2h-1.3zM61.85 248.90h1.3v1.2h-1.3zM59.85 244.90h1.3v1.2h-1.3zM58.85 242.90h1.3v1.2h-1.3zM58.85 241.90h1.3v1.2h-1.3zM54.85 237.90h1.3v1.2h-1.3zM52.85 240.90h1.3v1.2h-1.3zM33.85 225.90h1.3v1.2h-1.3zM34.85 229.90h1.3v1.2h-1.3zM38.85 233.90h1.3v1.2h-1.3zM40.85 229.90h1.3v1.2h-1.3zM43.85 230.90h1.3v1.2h-1.3zM47.85 234.90h1.3v1.2h-1.3zM50.85 235.90h1.3v1.2h-1.3zM54.85 235.90h1.3v1.2h-1.3zM82.85 226.90h1.3v1.2h-1.3zM84.85 228.90h1.3v1.2h-1.3zM85.85 232.90h1.3v1.2h-1.3zM87.85 240.90h1.3v1.2h-1.3zM88.85 246.90h1.3v1.2h-1.3zM88.85 250.90h1.3v1.2h-1.3zM312.85 129.90h1.3v1.2h-1.3zM312.85 130.90h1.3v1.2h-1.3zM315.85 134.90h1.3v1.2h-1.3zM314.85 137.90h1.3v1.2h-1.3zM317.85 143.90h1.3v1.2h-1.3zM317.85 145.90h1.3v1.2h-1.3zM317.85 150.90h1.3v1.2h-1.3zM318.85 152.90h1.3v1.2h-1.3zM318.85 157.90h1.3v1.2h-1.3zM317.85 160.90h1.3v1.2h-1.3zM317.85 163.90h1.3v1.2h-1.3zM318.85 170.90h1.3v1.2h-1.3zM318.85 172.90h1.3v1.2h-1.3zM317.85 175.90h1.3v1.2h-1.3zM317.85 179.90h1.3v1.2h-1.3zM316.85 182.90h1.3v1.2h-1.3zM316.85 187.90h1.3v1.2h-1.3zM314.85 191.90h1.3v1.2h-1.3zM313.85 195.90h1.3v1.2h-1.3zM315.85 196.90h1.3v1.2h-1.3zM315.85 199.90h1.3v1.2h-1.3zM311.85 202.90h1.3v1.2h-1.3zM311.85 206.90h1.3v1.2h-1.3zM310.85 210.90h1.3v1.2h-1.3zM319.85 146.90h1.3v1.2h-1.3zM315.85 148.90h1.3v1.2h-1.3zM315.85 161.90h1.3v1.2h-1.3zM316.85 145.90h1.3v1.2h-1.3zM319.85 153.90h1.3v1.2h-1.3zM319.85 151.90h1.3v1.2h-1.3zM318.85 154.90h1.3v1.2h-1.3zM317.85 153.90h1.3v1.2h-1.3zM316.85 151.90h1.3v1.2h-1.3zM317.85 157.90h1.3v1.2h-1.3zM320.85 155.90h1.3v1.2h-1.3zM316.85 152.90h1.3v1.2h-1.3zM319.85 160.90h1.3v1.2h-1.3zM315.85 150.90h1.3v1.2h-1.3zM317.85 149.90h1.3v1.2h-1.3zM319.85 158.90h1.3v1.2h-1.3zM316.85 147.90h1.3v1.2h-1.3zM318.85 147.90h1.3v1.2h-1.3zM314.85 153.90h1.3v1.2h-1.3zM318.85 149.90h1.3v1.2h-1.3zM317.85 156.90h1.3v1.2h-1.3zM314.85 152.90h1.3v1.2h-1.3zM317.85 155.90h1.3v1.2h-1.3zM316.85 141.90h1.3v1.2h-1.3zM317.85 154.90h1.3v1.2h-1.3zM313.85 149.90h1.3v1.2h-1.3zM318.85 159.90h1.3v1.2h-1.3zM317.85 152.90h1.3v1.2h-1.3zM314.85 147.90h1.3v1.2h-1.3zM316.85 150.90h1.3v1.2h-1.3zM316.85 142.90h1.3v1.2h-1.3zM318.85 142.90h1.3v1.2h-1.3zM316.85 144.90h1.3v1.2h-1.3zM319.85 147.90h1.3v1.2h-1.3zM317.85 191.90h1.3v1.2h-1.3zM319.85 192.90h1.3v1.2h-1.3zM316.85 191.90h1.3v1.2h-1.3zM317.85 189.90h1.3v1.2h-1.3zM319.85 189.90h1.3v1.2h-1.3zM318.85 186.90h1.3v1.2h-1.3zM314.85 182.90h1.3v1.2h-1.3zM312.85 184.90h1.3v1.2h-1.3zM315.85 188.90h1.3v1.2h-1.3zM318.85 194.90h1.3v1.2h-1.3zM318.85 193.90h1.3v1.2h-1.3zM318.85 189.90h1.3v1.2h-1.3zM318.85 196.90h1.3v1.2h-1.3zM312.85 190.90h1.3v1.2h-1.3zM311.85 197.90h1.3v1.2h-1.3zM315.85 193.90h1.3v1.2h-1.3zM316.85 188.90h1.3v1.2h-1.3zM314.85 184.90h1.3v1.2h-1.3zM315.85 192.90h1.3v1.2h-1.3zM317.85 196.90h1.3v1.2h-1.3zM318.85 192.90h1.3v1.2h-1.3zM316.85 196.90h1.3v1.2h-1.3zM317.85 185.90h1.3v1.2h-1.3zM323.85 195.90h1.3v1.2h-1.3zM313.85 192.90h1.3v1.2h-1.3zM317.85 193.90h1.3v1.2h-1.3zM316.85 185.90h1.3v1.2h-1.3zM316.85 192.90h1.3v1.2h-1.3zM316.85 197.90h1.3v1.2h-1.3zM320.85 202.90h1.3v1.2h-1.3zM317.85 188.90h1.3v1.2h-1.3zM321.85 190.90h1.3v1.2h-1.3zM320.85 192.90h1.3v1.2h-1.3zM315.85 190.90h1.3v1.2h-1.3zM316.85 190.90h1.3v1.2h-1.3zM317.85 182.90h1.3v1.2h-1.3zM318.85 191.90h1.3v1.2h-1.3zM319.85 196.90h1.3v1.2h-1.3zM323.85 189.90h1.3v1.2h-1.3zM317.85 192.90h1.3v1.2h-1.3zM318.85 190.90h1.3v1.2h-1.3zM314.85 199.90h1.3v1.2h-1.3zM317.85 187.90h1.3v1.2h-1.3zM322.85 193.90h1.3v1.2h-1.3zM314.85 192.90h1.3v1.2h-1.3zM321.85 185.90h1.3v1.2h-1.3zM316.85 194.90h1.3v1.2h-1.3zM316.85 189.90h1.3v1.2h-1.3zM318.85 198.90h1.3v1.2h-1.3zM315.85 191.90h1.3v1.2h-1.3zM318.85 197.90h1.3v1.2h-1.3zM316.85 193.90h1.3v1.2h-1.3zM320.85 191.90h1.3v1.2h-1.3zM315.85 194.90h1.3v1.2h-1.3zM318.85 195.90h1.3v1.2h-1.3zM318.85 188.90h1.3v1.2h-1.3zM317.85 190.90h1.3v1.2h-1.3zM317.85 195.90h1.3v1.2h-1.3zM317.85 184.90h1.3v1.2h-1.3zM317.85 194.90h1.3v1.2h-1.3zM319.85 183.90h1.3v1.2h-1.3zM319.85 191.90h1.3v1.2h-1.3zM317.85 183.90h1.3v1.2h-1.3zM319.85 190.90h1.3v1.2h-1.3zM319.85 193.90h1.3v1.2h-1.3zM321.85 195.90h1.3v1.2h-1.3zM316.85 183.90h1.3v1.2h-1.3zM315.85 187.90h1.3v1.2h-1.3zM320.85 189.90h1.3v1.2h-1.3zM318.85 184.90h1.3v1.2h-1.3zM319.85 188.90h1.3v1.2h-1.3zM315.85 185.90h1.3v1.2h-1.3zM319.85 195.90h1.3v1.2h-1.3zM315.85 183.90h1.3v1.2h-1.3zM318.85 183.90h1.3v1.2h-1.3zM317.85 186.90h1.3v1.2h-1.3zM292.85 241.90h1.3v1.2h-1.3zM290.85 242.90h1.3v1.2h-1.3zM289.85 247.90h1.3v1.2h-1.3zM285.85 248.90h1.3v1.2h-1.3zM283.85 251.90h1.3v1.2h-1.3zM279.85 250.90h1.3v1.2h-1.3zM277.85 250.90h1.3v1.2h-1.3zM273.85 252.90h1.3v1.2h-1.3zM270.85 250.90h1.3v1.2h-1.3zM267.85 248.90h1.3v1.2h-1.3zM259.85 226.90h1.3v1.2h-1.3zM261.85 228.90h1.3v1.2h-1.3zM265.85 231.90h1.3v1.2h-1.3zM271.85 234.90h1.3v1.2h-1.3zM274.85 235.90h1.3v1.2h-1.3zM280.85 235.90h1.3v1.2h-1.3zM284.85 236.90h1.3v1.2h-1.3zM286.85 234.90h1.3v1.2h-1.3zM288.85 228.90h1.3v1.2h-1.3zM292.85 227.90h1.3v1.2h-1.3zM296.85 220.90h1.3v1.2h-1.3zM244.85 208.90h1.3v1.2h-1.3zM261.85 213.90h1.3v1.2h-1.3zM257.85 174.90h1.3v1.2h-1.3zM254.85 232.90h1.3v1.2h-1.3zM296.85 198.90h1.3v1.2h-1.3zM284.85 220.90h1.3v1.2h-1.3zM277.85 149.90h1.3v1.2h-1.3zM280.85 198.90h1.3v1.2h-1.3zM258.85 156.90h1.3v1.2h-1.3zM246.85 211.90h1.3v1.2h-1.3zM304.85 160.90h1.3v1.2h-1.3zM257.85 181.90h1.3v1.2h-1.3zM264.85 223.90h1.3v1.2h-1.3zM261.85 159.90h1.3v1.2h-1.3zM273.85 236.90h1.3v1.2h-1.3zM296.85 141.90h1.3v1.2h-1.3zM253.85 133.90h1.3v1.2h-1.3zM293.85 210.90h1.3v1.2h-1.3zM255.85 162.90h1.3v1.2h-1.3zM307.85 132.90h1.3v1.2h-1.3zM292.85 167.90h1.3v1.2h-1.3zM284.85 206.90h1.3v1.2h-1.3zM288.85 245.90h1.3v1.2h-1.3zM279.85 142.90h1.3v1.2h-1.3zM279.85 180.90h1.3v1.2h-1.3zM294.85 188.90h1.3v1.2h-1.3zM260.85 152.90h1.3v1.2h-1.3zM299.85 199.90h1.3v1.2h-1.3zM301.85 151.90h1.3v1.2h-1.3zM276.85 141.90h1.3v1.2h-1.3zM255.85 171.90h1.3v1.2h-1.3zM263.85 248.90h1.3v1.2h-1.3zM250.85 192.90h1.3v1.2h-1.3zM249.85 239.90h1.3v1.2h-1.3zM250.85 236.90h1.3v1.2h-1.3zM266.85 172.90h1.3v1.2h-1.3zM249.85 206.90h1.3v1.2h-1.3zM247.85 212.90h1.3v1.2h-1.3zM282.85 161.90h1.3v1.2h-1.3zM291.85 217.90h1.3v1.2h-1.3zM247.85 243.90h1.3v1.2h-1.3zM312.85 170.90h1.3v1.2h-1.3zM252.85 181.90h1.3v1.2h-1.3zM250.85 222.90h1.3v1.2h-1.3zM303.85 185.90h1.3v1.2h-1.3zM291.85 238.90h1.3v1.2h-1.3zM274.85 227.90h1.3v1.2h-1.3zM285.85 227.90h1.3v1.2h-1.3zM306.85 145.90h1.3v1.2h-1.3zM256.85 201.90h1.3v1.2h-1.3zM268.85 164.90h1.3v1.2h-1.3zM242.85 183.90h1.3v1.2h-1.3zM258.85 174.90h1.3v1.2h-1.3zM288.85 129.90h1.3v1.2h-1.3zM255.85 193.90h1.3v1.2h-1.3zM270.85 215.90h1.3v1.2h-1.3zM252.85 134.90h1.3v1.2h-1.3zM291.85 203.90h1.3v1.2h-1.3zM257.85 145.90h1.3v1.2h-1.3zM276.85 213.90h1.3v1.2h-1.3zM277.85 190.90h1.3v1.2h-1.3zM248.85 247.90h1.3v1.2h-1.3zM260.85 176.90h1.3v1.2h-1.3zM270.85 184.90h1.3v1.2h-1.3zM306.85 189.90h1.3v1.2h-1.3zM251.85 154.90h1.3v1.2h-1.3zM268.85 126.90h1.3v1.2h-1.3zM247.85 240.90h1.3v1.2h-1.3zM265.85 171.90h1.3v1.2h-1.3zM313.85 133.90h1.3v1.2h-1.3zM275.85 173.90h1.3v1.2h-1.3zM299.85 214.90h1.3v1.2h-1.3zM288.85 243.90h1.3v1.2h-1.3zM287.85 152.90h1.3v1.2h-1.3zM281.85 160.90h1.3v1.2h-1.3zM250.85 209.90h1.3v1.2h-1.3zM291.85 225.90h1.3v1.2h-1.3zM253.85 201.90h1.3v1.2h-1.3zM250.85 181.90h1.3v1.2h-1.3zM269.85 172.90h1.3v1.2h-1.3zM273.85 192.90h1.3v1.2h-1.3zM250.85 194.90h1.3v1.2h-1.3zM248.85 216.90h1.3v1.2h-1.3zM245.85 188.90h1.3v1.2h-1.3zM242.85 226.90h1.3v1.2h-1.3zM277.85 185.90h1.3v1.2h-1.3zM299.85 136.90h1.3v1.2h-1.3zM269.85 188.90h1.3v1.2h-1.3zM255.85 185.90h1.3v1.2h-1.3zM269.85 144.90h1.3v1.2h-1.3zM287.85 182.90h1.3v1.2h-1.3zM252.85 194.90h1.3v1.2h-1.3zM259.85 199.90h1.3v1.2h-1.3zM266.85 218.90h1.3v1.2h-1.3zM287.85 126.90h1.3v1.2h-1.3zM268.85 223.90h1.3v1.2h-1.3zM268.85 225.90h1.3v1.2h-1.3zM299.85 181.90h1.3v1.2h-1.3zM278.85 137.90h1.3v1.2h-1.3zM264.85 160.90h1.3v1.2h-1.3zM290.85 224.90h1.3v1.2h-1.3zM275.85 208.90h1.3v1.2h-1.3zM269.85 128.90h1.3v1.2h-1.3zM282.85 238.90h1.3v1.2h-1.3zM280.85 242.90h1.3v1.2h-1.3zM271.85 158.90h1.3v1.2h-1.3zM254.85 181.90h1.3v1.2h-1.3zM266.85 140.90h1.3v1.2h-1.3zM266.85 248.90h1.3v1.2h-1.3zM301.85 180.90h1.3v1.2h-1.3zM260.85 190.90h1.3v1.2h-1.3zM267.85 205.90h1.3v1.2h-1.3zM263.85 206.90h1.3v1.2h-1.3zM300.85 162.90h1.3v1.2h-1.3zM286.85 239.90h1.3v1.2h-1.3zM304.85 185.90h1.3v1.2h-1.3zM280.85 227.90h1.3v1.2h-1.3zM286.85 141.90h1.3v1.2h-1.3zM271.85 141.90h1.3v1.2h-1.3zM218.85 226.90h1.3v1.2h-1.3zM215.85 133.90h1.3v1.2h-1.3zM195.85 128.90h1.3v1.2h-1.3zM219.85 222.90h1.3v1.2h-1.3zM177.85 218.90h1.3v1.2h-1.3zM164.85 145.90h1.3v1.2h-1.3zM240.85 154.90h1.3v1.2h-1.3zM216.85 246.90h1.3v1.2h-1.3zM226.85 184.90h1.3v1.2h-1.3zM197.85 177.90h1.3v1.2h-1.3zM173.85 226.90h1.3v1.2h-1.3zM205.85 224.90h1.3v1.2h-1.3zM201.85 156.90h1.3v1.2h-1.3zM182.85 141.90h1.3v1.2h-1.3zM222.85 190.90h1.3v1.2h-1.3zM193.85 251.90h1.3v1.2h-1.3zM191.85 171.90h1.3v1.2h-1.3zM179.85 162.90h1.3v1.2h-1.3zM181.85 191.90h1.3v1.2h-1.3zM196.85 186.90h1.3v1.2h-1.3zM232.85 171.90h1.3v1.2h-1.3zM212.85 191.90h1.3v1.2h-1.3zM241.85 202.90h1.3v1.2h-1.3zM240.85 172.90h1.3v1.2h-1.3zM177.85 153.90h1.3v1.2h-1.3zM230.85 141.90h1.3v1.2h-1.3zM185.85 235.90h1.3v1.2h-1.3zM165.85 216.90h1.3v1.2h-1.3zM194.85 155.90h1.3v1.2h-1.3zM241.85 236.90h1.3v1.2h-1.3zM178.85 143.90h1.3v1.2h-1.3zM208.85 135.90h1.3v1.2h-1.3zM241.85 168.90h1.3v1.2h-1.3zM187.85 133.90h1.3v1.2h-1.3zM202.85 198.90h1.3v1.2h-1.3zM171.85 216.90h1.3v1.2h-1.3zM204.85 231.90h1.3v1.2h-1.3zM239.85 237.90h1.3v1.2h-1.3zM198.85 170.90h1.3v1.2h-1.3zM215.85 178.90h1.3v1.2h-1.3zM199.85 158.90h1.3v1.2h-1.3zM173.85 139.90h1.3v1.2h-1.3zM215.85 243.90h1.3v1.2h-1.3zM244.85 160.90h1.3v1.2h-1.3zM178.85 137.90h1.3v1.2h-1.3zM323.85 169.90h1.3v1.2h-1.3zM321.85 172.90h1.3v1.2h-1.3zM322.85 178.90h1.3v1.2h-1.3zM321.85 179.90h1.3v1.2h-1.3zM319.85 184.90h1.3v1.2h-1.3zM316.85 198.90h1.3v1.2h-1.3zM315.85 203.90h1.3v1.2h-1.3zM313.85 205.90h1.3v1.2h-1.3zM311.85 207.90h1.3v1.2h-1.3zM308.85 214.90h1.3v1.2h-1.3zM305.85 218.90h1.3v1.2h-1.3zM304.85 222.90h1.3v1.2h-1.3zM302.85 227.90h1.3v1.2h-1.3zM301.85 228.90h1.3v1.2h-1.3zM299.85 234.90h1.3v1.2h-1.3zM296.85 236.90h1.3v1.2h-1.3zM296.85 240.90h1.3v1.2h-1.3zM293.85 246.90h1.3v1.2h-1.3zM292.85 250.90h1.3v1.2h-1.3zM289.85 252.90h1.3v1.2h-1.3zM285.85 253.90h1.3v1.2h-1.3zM282.85 255.90h1.3v1.2h-1.3zM280.85 260.90h1.3v1.2h-1.3zM277.85 261.90h1.3v1.2h-1.3zM275.85 265.90h1.3v1.2h-1.3zM271.85 268.90h1.3v1.2h-1.3zM268.85 269.90h1.3v1.2h-1.3zM265.85 272.90h1.3v1.2h-1.3zM261.85 275.90h1.3v1.2h-1.3zM260.85 278.90h1.3v1.2h-1.3zM255.85 278.90h1.3v1.2h-1.3zM250.85 282.90h1.3v1.2h-1.3zM248.85 283.90h1.3v1.2h-1.3zM243.85 285.90h1.3v1.2h-1.3zM238.85 288.90h1.3v1.2h-1.3zM237.85 288.90h1.3v1.2h-1.3zM233.85 291.90h1.3v1.2h-1.3zM229.85 292.90h1.3v1.2h-1.3zM225.85 293.90h1.3v1.2h-1.3zM222.85 296.90h1.3v1.2h-1.3zM216.85 298.90h1.3v1.2h-1.3zM213.85 298.90h1.3v1.2h-1.3zM206.85 298.90h1.3v1.2h-1.3zM202.85 300.90h1.3v1.2h-1.3zM196.85 302.90h1.3v1.2h-1.3zM195.85 301.90h1.3v1.2h-1.3zM192.85 300.90h1.3v1.2h-1.3zM33.85 229.90h1.3v1.2h-1.3zM37.85 232.90h1.3v1.2h-1.3zM39.85 234.90h1.3v1.2h-1.3zM43.85 236.90h1.3v1.2h-1.3zM44.85 240.90h1.3v1.2h-1.3zM46.85 243.90h1.3v1.2h-1.3zM46.85 247.90h1.3v1.2h-1.3zM48.85 249.90h1.3v1.2h-1.3zM48.85 252.90h1.3v1.2h-1.3zM50.85 255.90h1.3v1.2h-1.3zM52.85 258.90h1.3v1.2h-1.3zM55.85 261.90h1.3v1.2h-1.3zM55.85 262.90h1.3v1.2h-1.3zM59.85 263.90h1.3v1.2h-1.3zM62.85 265.90h1.3v1.2h-1.3zM66.85 264.90h1.3v1.2h-1.3zM65.85 261.90h1.3v1.2h-1.3zM68.85 259.90h1.3v1.2h-1.3zM70.85 257.90h1.3v1.2h-1.3zM74.85 257.90h1.3v1.2h-1.3zM77.85 256.90h1.3v1.2h-1.3zM80.85 254.90h1.3v1.2h-1.3zM82.85 252.90h1.3v1.2h-1.3zM86.85 250.90h1.3v1.2h-1.3zM88.85 247.90h1.3v1.2h-1.3zM88.85 245.90h1.3v1.2h-1.3zM86.85 240.90h1.3v1.2h-1.3zM87.85 236.90h1.3v1.2h-1.3zM88.85 233.90h1.3v1.2h-1.3zM91.85 232.90h1.3v1.2h-1.3zM93.85 230.90h1.3v1.2h-1.3zM55.85 236.90h1.3v1.2h-1.3zM58.85 239.90h1.3v1.2h-1.3zM59.85 243.90h1.3v1.2h-1.3zM62.85 246.90h1.3v1.2h-1.3zM63.85 248.90h1.3v1.2h-1.3zM64.85 252.90h1.3v1.2h-1.3zM67.85 252.90h1.3v1.2h-1.3zM72.85 256.90h1.3v1.2h-1.3zM71.85 257.90h1.3v1.2h-1.3zM62.85 239.90h1.3v1.2h-1.3zM65.85 242.90h1.3v1.2h-1.3zM67.85 244.90h1.3v1.2h-1.3zM73.85 247.90h1.3v1.2h-1.3zM75.85 246.90h1.3v1.2h-1.3zM79.85 247.90h1.3v1.2h-1.3zM81.85 244.90h1.3v1.2h-1.3zM86.85 244.90h1.3v1.2h-1.3zM89.85 245.90h1.3v1.2h-1.3zM93.85 246.90h1.3v1.2h-1.3zM97.85 246.90h1.3v1.2h-1.3zM102.85 247.90h1.3v1.2h-1.3zM103.85 246.90h1.3v1.2h-1.3zM110.85 249.90h1.3v1.2h-1.3zM118.85 248.90h1.3v1.2h-1.3zM123.85 249.90h1.3v1.2h-1.3zM127.85 249.90h1.3v1.2h-1.3zM137.85 248.90h1.3v1.2h-1.3zM144.85 247.90h1.3v1.2h-1.3zM149.85 246.90h1.3v1.2h-1.3zM156.85 246.90h1.3v1.2h-1.3zM80.85 273.90h1.3v1.2h-1.3zM88.85 268.90h1.3v1.2h-1.3zM93.85 266.90h1.3v1.2h-1.3zM98.85 268.90h1.3v1.2h-1.3zM130.85 268.90h1.3v1.2h-1.3zM138.85 266.90h1.3v1.2h-1.3zM144.85 262.90h1.3v1.2h-1.3zM153.85 255.90h1.3v1.2h-1.3zM147.85 299.90h1.3v1.2h-1.3zM157.85 299.90h1.3v1.2h-1.3zM91.85 282.90h1.3v1.2h-1.3zM92.85 281.90h1.3v1.2h-1.3zM95.85 279.90h1.3v1.2h-1.3zM100.85 277.90h1.3v1.2h-1.3zM103.85 276.90h1.3v1.2h-1.3zM106.85 274.90h1.3v1.2h-1.3zM109.85 273.90h1.3v1.2h-1.3zM114.85 272.90h1.3v1.2h-1.3zM115.85 274.90h1.3v1.2h-1.3zM117.85 274.90h1.3v1.2h-1.3zM121.85 272.90h1.3v1.2h-1.3zM87.85 281.90h1.3v1.2h-1.3zM89.85 283.90h1.3v1.2h-1.3zM91.85 287.90h1.3v1.2h-1.3zM94.85 288.90h1.3v1.2h-1.3zM96.85 290.90h1.3v1.2h-1.3zM99.85 289.90h1.3v1.2h-1.3zM102.85 290.90h1.3v1.2h-1.3zM105.85 291.90h1.3v1.2h-1.3zM109.85 291.90h1.3v1.2h-1.3zM111.85 293.90h1.3v1.2h-1.3zM114.85 295.90h1.3v1.2h-1.3zM116.85 295.90h1.3v1.2h-1.3zM117.85 296.90h1.3v1.2h-1.3zM122.85 298.90h1.3v1.2h-1.3zM124.85 300.90h1.3v1.2h-1.3zM127.85 298.90h1.3v1.2h-1.3zM128.85 300.90h1.3v1.2h-1.3zM131.85 302.90h1.3v1.2h-1.3zM133.85 302.90h1.3v1.2h-1.3zM136.85 301.90h1.3v1.2h-1.3zM139.85 300.90h1.3v1.2h-1.3zM142.85 301.90h1.3v1.2h-1.3zM141.85 300.90h1.3v1.2h-1.3zM141.85 301.90h1.3v1.2h-1.3zM140.85 301.90h1.3v1.2h-1.3zM141.85 302.90h1.3v1.2h-1.3zM91.85 286.90h1.3v1.2h-1.3zM90.85 284.90h1.3v1.2h-1.3zM92.85 283.90h1.3v1.2h-1.3zM91.85 284.90h1.3v1.2h-1.3zM90.85 283.90h1.3v1.2h-1.3zM101.85 279.90h1.3v1.2h-1.3zM102.85 279.90h1.3v1.2h-1.3zM108.85 276.90h1.3v1.2h-1.3zM113.85 276.90h1.3v1.2h-1.3zM115.85 277.90h1.3v1.2h-1.3zM121.85 278.90h1.3v1.2h-1.3zM126.85 279.90h1.3v1.2h-1.3zM129.85 278.90h1.3v1.2h-1.3zM133.85 277.90h1.3v1.2h-1.3zM137.85 278.90h1.3v1.2h-1.3zM143.85 279.90h1.3v1.2h-1.3zM148.85 278.90h1.3v1.2h-1.3zM151.85 276.90h1.3v1.2h-1.3zM154.85 277.90h1.3v1.2h-1.3zM158.85 283.90h1.3v1.2h-1.3zM121.85 293.90h1.3v1.2h-1.3zM125.85 293.90h1.3v1.2h-1.3zM129.85 296.90h1.3v1.2h-1.3zM131.85 294.90h1.3v1.2h-1.3zM134.85 295.90h1.3v1.2h-1.3zM135.85 296.90h1.3v1.2h-1.3zM140.85 297.90h1.3v1.2h-1.3zM217.85 280.90h1.3v1.2h-1.3zM256.85 241.90h1.3v1.2h-1.3zM270.85 265.90h1.3v1.2h-1.3zM181.85 248.90h1.3v1.2h-1.3zM253.85 240.90h1.3v1.2h-1.3zM218.85 261.90h1.3v1.2h-1.3zM195.85 251.90h1.3v1.2h-1.3zM269.85 236.90h1.3v1.2h-1.3zM227.85 293.90h1.3v1.2h-1.3zM176.85 285.90h1.3v1.2h-1.3zM269.85 248.90h1.3v1.2h-1.3zM178.85 253.90h1.3v1.2h-1.3zM219.85 281.90h1.3v1.2h-1.3zM186.85 241.90h1.3v1.2h-1.3zM270.85 231.90h1.3v1.2h-1.3zM253.85 258.90h1.3v1.2h-1.3zM220.85 261.90h1.3v1.2h-1.3zM220.85 292.90h1.3v1.2h-1.3zM190.85 265.90h1.3v1.2h-1.3zM179.85 288.90h1.3v1.2h-1.3zM292.85 239.90h1.3v1.2h-1.3zM231.85 278.90h1.3v1.2h-1.3zM245.85 232.90h1.3v1.2h-1.3zM229.85 255.90h1.3v1.2h-1.3zM186.85 271.90h1.3v1.2h-1.3zM236.85 259.90h1.3v1.2h-1.3zM201.85 264.90h1.3v1.2h-1.3zM191.85 282.90h1.3v1.2h-1.3zM214.85 298.90h1.3v1.2h-1.3zM208.85 245.90h1.3v1.2h-1.3zM200.85 286.90h1.3v1.2h-1.3zM243.85 279.90h1.3v1.2h-1.3zM222.85 271.90h1.3v1.2h-1.3zM191.85 298.90h1.3v1.2h-1.3zM231.85 266.90h1.3v1.2h-1.3zM189.85 269.90h1.3v1.2h-1.3zM186.85 256.90h1.3v1.2h-1.3zM186.85 244.90h1.3v1.2h-1.3zM241.85 233.90h1.3v1.2h-1.3zM276.85 255.90h1.3v1.2h-1.3zM259.85 255.90h1.3v1.2h-1.3zM199.85 282.90h1.3v1.2h-1.3zM280.85 248.90h1.3v1.2h-1.3zM182.85 269.90h1.3v1.2h-1.3zM242.85 277.90h1.3v1.2h-1.3zM275.85 255.90h1.3v1.2h-1.3zM208.85 247.90h1.3v1.2h-1.3zM245.85 268.90h1.3v1.2h-1.3zM273.85 230.90h1.3v1.2h-1.3zM190.85 269.90h1.3v1.2h-1.3zM256.85 250.90h1.3v1.2h-1.3zM194.85 239.90h1.3v1.2h-1.3zM221.85 264.90h1.3v1.2h-1.3zM248.85 235.90h1.3v1.2h-1.3zM186.85 263.90h1.3v1.2h-1.3zM211.85 280.90h1.3v1.2h-1.3zM203.85 232.90h1.3v1.2h-1.3zM200.85 270.90h1.3v1.2h-1.3zM204.85 280.90h1.3v1.2h-1.3zM296.85 230.90h1.3v1.2h-1.3zM240.85 245.90h1.3v1.2h-1.3zM226.85 249.90h1.3v1.2h-1.3zM275.85 249.90h1.3v1.2h-1.3zM214.85 279.90h1.3v1.2h-1.3zM192.85 242.90h1.3v1.2h-1.3zM213.85 273.90h1.3v1.2h-1.3zM191.85 231.90h1.3v1.2h-1.3zM206.85 258.90h1.3v1.2h-1.3zM204.85 263.90h1.3v1.2h-1.3zM276.85 230.90h1.3v1.2h-1.3zM244.85 245.90h1.3v1.2h-1.3zM276.85 256.90h1.3v1.2h-1.3zM293.85 229.90h1.3v1.2h-1.3zM214.85 240.90h1.3v1.2h-1.3zM265.85 267.90h1.3v1.2h-1.3zM254.85 233.90h1.3v1.2h-1.3zM189.85 288.90h1.3v1.2h-1.3zM232.85 276.90h1.3v1.2h-1.3zM214.85 267.90h1.3v1.2h-1.3zM232.85 236.90h1.3v1.2h-1.3zM237.85 241.90h1.3v1.2h-1.3zM229.85 256.90h1.3v1.2h-1.3zM200.85 257.90h1.3v1.2h-1.3zM222.85 279.90h1.3v1.2h-1.3zM286.85 229.90h1.3v1.2h-1.3zM235.85 287.90h1.3v1.2h-1.3zM181.85 299.90h1.3v1.2h-1.3zM213.85 287.90h1.3v1.2h-1.3zM280.85 228.90h1.3v1.2h-1.3zM238.85 254.90h1.3v1.2h-1.3zM283.85 234.90h1.3v1.2h-1.3zM263.85 230.90h1.3v1.2h-1.3zM255.85 266.90h1.3v1.2h-1.3zM225.85 275.90h1.3v1.2h-1.3zM231.85 287.90h1.3v1.2h-1.3zM195.85 272.90h1.3v1.2h-1.3zM218.85 260.90h1.3v1.2h-1.3zM240.85 276.90h1.3v1.2h-1.3zM206.85 235.90h1.3v1.2h-1.3zM233.85 270.90h1.3v1.2h-1.3zM271.85 260.90h1.3v1.2h-1.3zM183.85 292.90h1.3v1.2h-1.3zM232.85 231.90h1.3v1.2h-1.3zM227.85 284.90h1.3v1.2h-1.3zM206.85 281.90h1.3v1.2h-1.3zM178.85 285.90h1.3v1.2h-1.3zM203.85 259.90h1.3v1.2h-1.3zM244.85 265.90h1.3v1.2h-1.3zM194.85 257.90h1.3v1.2h-1.3zM241.85 241.90h1.3v1.2h-1.3zM190.85 280.90h1.3v1.2h-1.3zM217.85 255.90h1.3v1.2h-1.3zM253.85 234.90h1.3v1.2h-1.3zM193.85 288.90h1.3v1.2h-1.3zM224.85 281.90h1.3v1.2h-1.3zM197.85 283.90h1.3v1.2h-1.3zM243.85 237.90h1.3v1.2h-1.3zM193.85 248.90h1.3v1.2h-1.3zM227.85 271.90h1.3v1.2h-1.3zM201.85 270.90h1.3v1.2h-1.3zM205.85 228.90h1.3v1.2h-1.3zM242.85 261.90h1.3v1.2h-1.3zM261.85 269.90h1.3v1.2h-1.3zM188.85 234.90h1.3v1.2h-1.3zM256.85 268.90h1.3v1.2h-1.3zM244.85 253.90h1.3v1.2h-1.3zM208.85 279.90h1.3v1.2h-1.3zM268.85 267.90h1.3v1.2h-1.3zM205.85 235.90h1.3v1.2h-1.3zM258.85 239.90h1.3v1.2h-1.3zM272.85 252.90h1.3v1.2h-1.3zM276.85 251.90h1.3v1.2h-1.3zM225.85 281.90h1.3v1.2h-1.3zM184.85 251.90h1.3v1.2h-1.3zM202.85 242.90h1.3v1.2h-1.3zM209.85 230.90h1.3v1.2h-1.3zM248.85 262.90h1.3v1.2h-1.3zM231.85 265.90h1.3v1.2h-1.3zM209.85 288.90h1.3v1.2h-1.3zM209.85 253.90h1.3v1.2h-1.3zM234.85 229.90h1.3v1.2h-1.3zM283.85 228.90h1.3v1.2h-1.3zM193.85 300.90h1.3v1.2h-1.3zM277.85 230.90h1.3v1.2h-1.3zM205.85 261.90h1.3v1.2h-1.3zM178.85 247.90h1.3v1.2h-1.3zM183.85 284.90h1.3v1.2h-1.3zM204.85 278.90h1.3v1.2h-1.3zM178.85 288.90h1.3v1.2h-1.3zM296.85 233.90h1.3v1.2h-1.3zM216.85 267.90h1.3v1.2h-1.3zM177.85 243.90h1.3v1.2h-1.3zM183.85 256.90h1.3v1.2h-1.3zM209.85 234.90h1.3v1.2h-1.3zM184.85 243.90h1.3v1.2h-1.3zM184.85 239.90h1.3v1.2h-1.3zM187.85 297.90h1.3v1.2h-1.3zM198.85 246.90h1.3v1.2h-1.3zM182.85 295.90h1.3v1.2h-1.3zM234.85 274.90h1.3v1.2h-1.3zM245.85 284.90h1.3v1.2h-1.3zM204.85 297.90h1.3v1.2h-1.3zM243.85 230.90h1.3v1.2h-1.3zM214.85 238.90h1.3v1.2h-1.3zM251.85 257.90h1.3v1.2h-1.3zM210.85 254.90h1.3v1.2h-1.3zM182.85 286.90h1.3v1.2h-1.3zM196.85 297.90h1.3v1.2h-1.3zM239.85 269.90h1.3v1.2h-1.3zM212.85 272.90h1.3v1.2h-1.3zM217.85 229.90h1.3v1.2h-1.3zM263.85 265.90h1.3v1.2h-1.3zM286.85 232.90h1.3v1.2h-1.3zM204.85 257.90h1.3v1.2h-1.3zM179.85 235.90h1.3v1.2h-1.3zM261.85 243.90h1.3v1.2h-1.3zM220.85 244.90h1.3v1.2h-1.3zM221.85 251.90h1.3v1.2h-1.3zM226.85 283.90h1.3v1.2h-1.3zM260.85 234.90h1.3v1.2h-1.3zM198.85 247.90h1.3v1.2h-1.3zM190.85 249.90h1.3v1.2h-1.3zM234.85 272.90h1.3v1.2h-1.3zM232.85 257.90h1.3v1.2h-1.3zM244.85 274.90h1.3v1.2h-1.3zM194.85 265.90h1.3v1.2h-1.3zM241.85 242.90h1.3v1.2h-1.3zM220.85 253.90h1.3v1.2h-1.3zM238.85 234.90h1.3v1.2h-1.3zM177.85 252.90h1.3v1.2h-1.3zM220.85 251.90h1.3v1.2h-1.3zM239.85 278.90h1.3v1.2h-1.3zM186.85 300.90h1.3v1.2h-1.3zM294.85 236.90h1.3v1.2h-1.3zM216.85 279.90h1.3v1.2h-1.3zM262.85 259.90h1.3v1.2h-1.3zM190.85 301.90h1.3v1.2h-1.3zM224.85 292.90h1.3v1.2h-1.3zM266.85 254.90h1.3v1.2h-1.3zM242.85 260.90h1.3v1.2h-1.3zM281.85 253.90h1.3v1.2h-1.3zM233.85 290.90h1.3v1.2h-1.3zM191.85 291.90h1.3v1.2h-1.3zM248.85 282.90h1.3v1.2h-1.3zM264.85 247.90h1.3v1.2h-1.3zM222.85 237.90h1.3v1.2h-1.3zM273.85 255.90h1.3v1.2h-1.3zM272.85 257.90h1.3v1.2h-1.3zM274.85 255.90h1.3v1.2h-1.3zM275.85 256.90h1.3v1.2h-1.3zM274.85 256.90h1.3v1.2h-1.3zM270.85 252.90h1.3v1.2h-1.3zM271.85 252.90h1.3v1.2h-1.3zM270.85 256.90h1.3v1.2h-1.3zM284.85 262.90h1.3v1.2h-1.3zM272.85 253.90h1.3v1.2h-1.3zM274.85 258.90h1.3v1.2h-1.3zM271.85 257.90h1.3v1.2h-1.3zM273.85 250.90h1.3v1.2h-1.3zM277.85 251.90h1.3v1.2h-1.3zM170.85 273.90h1.3v1.2h-1.3zM168.85 275.90h1.3v1.2h-1.3zM169.85 273.90h1.3v1.2h-1.3zM168.85 272.90h1.3v1.2h-1.3zM170.85 274.90h1.3v1.2h-1.3zM169.85 274.90h1.3v1.2h-1.3zM225.85 291.90h1.3v1.2h-1.3zM223.85 292.90h1.3v1.2h-1.3zM224.85 291.90h1.3v1.2h-1.3zM225.85 292.90h1.3v1.2h-1.3zM185.85 302.90h1.3v1.2h-1.3zM188.85 302.90h1.3v1.2h-1.3zM190.85 300.90h1.3v1.2h-1.3zM195.85 299.90h1.3v1.2h-1.3zM195.85 297.90h1.3v1.2h-1.3zM199.85 297.90h1.3v1.2h-1.3zM165.85 245.90h1.3v1.2h-1.3zM169.85 253.90h1.3v1.2h-1.3zM171.85 261.90h1.3v1.2h-1.3zM170.85 267.90h1.3v1.2h-1.3zM165.85 295.90h1.3v1.2h-1.3zM172.85 294.90h1.3v1.2h-1.3zM160.85 287.90h1.3v1.2h-1.3zM164.85 274.90h1.3v1.2h-1.3zM152.85 122.90h1.3v1.2h-1.3zM141.85 234.90h1.3v1.2h-1.3zM170.85 152.90h1.3v1.2h-1.3zM210.85 206.90h1.3v1.2h-1.3zM146.85 126.90h1.3v1.2h-1.3zM171.85 199.90h1.3v1.2h-1.3zM141.85 224.90h1.3v1.2h-1.3zM122.85 124.90h1.3v1.2h-1.3zM156.85 116.90h1.3v1.2h-1.3zM123.85 136.90h1.3v1.2h-1.3zM107.85 179.90h1.3v1.2h-1.3zM177.85 111.90h1.3v1.2h-1.3zM202.85 151.90h1.3v1.2h-1.3zM177.85 221.90h1.3v1.2h-1.3zM171.85 106.90h1.3v1.2h-1.3zM149.85 113.90h1.3v1.2h-1.3zM221.85 125.90h1.3v1.2h-1.3zM115.85 157.90h1.3v1.2h-1.3zM150.85 206.90h1.3v1.2h-1.3zM109.85 123.90h1.3v1.2h-1.3zM147.85 106.90h1.3v1.2h-1.3zM173.85 222.90h1.3v1.2h-1.3zM226.85 177.90h1.3v1.2h-1.3zM107.85 184.90h1.3v1.2h-1.3zM125.85 169.90h1.3v1.2h-1.3zM187.85 230.90h1.3v1.2h-1.3zM180.85 128.90h1.3v1.2h-1.3zM117.85 201.90h1.3v1.2h-1.3zM152.85 136.90h1.3v1.2h-1.3zM177.85 189.90h1.3v1.2h-1.3zM185.85 92.90h1.3v1.2h-1.3zM215.85 188.90h1.3v1.2h-1.3zM219.85 189.90h1.3v1.2h-1.3zM191.85 130.90h1.3v1.2h-1.3zM151.85 228.90h1.3v1.2h-1.3zM147.85 225.90h1.3v1.2h-1.3zM140.85 158.90h1.3v1.2h-1.3zM231.85 185.90h1.3v1.2h-1.3zM174.85 91.90h1.3v1.2h-1.3zM157.85 109.90h1.3v1.2h-1.3zM180.85 235.90h1.3v1.2h-1.3zM140.85 228.90h1.3v1.2h-1.3zM221.85 195.90h1.3v1.2h-1.3zM128.85 111.90h1.3v1.2h-1.3zM186.85 219.90h1.3v1.2h-1.3zM145.85 204.90h1.3v1.2h-1.3zM189.85 109.90h1.3v1.2h-1.3zM198.85 133.90h1.3v1.2h-1.3zM128.85 158.90h1.3v1.2h-1.3zM111.85 219.90h1.3v1.2h-1.3zM183.85 236.90h1.3v1.2h-1.3zM112.85 145.90h1.3v1.2h-1.3zM168.85 114.90h1.3v1.2h-1.3zM195.85 211.90h1.3v1.2h-1.3zM164.85 98.90h1.3v1.2h-1.3zM149.85 217.90h1.3v1.2h-1.3zM234.85 147.90h1.3v1.2h-1.3zM198.85 96.90h1.3v1.2h-1.3zM171.85 144.90h1.3v1.2h-1.3zM235.85 175.90h1.3v1.2h-1.3zM227.85 152.90h1.3v1.2h-1.3zM151.85 168.90h1.3v1.2h-1.3zM118.85 150.90h1.3v1.2h-1.3zM147.85 116.90h1.3v1.2h-1.3zM215.85 175.90h1.3v1.2h-1.3zM200.85 180.90h1.3v1.2h-1.3zM135.85 131.90h1.3v1.2h-1.3zM130.85 183.90h1.3v1.2h-1.3zM146.85 109.90h1.3v1.2h-1.3zM213.85 109.90h1.3v1.2h-1.3zM233.85 139.90h1.3v1.2h-1.3zM138.85 220.90h1.3v1.2h-1.3zM149.85 169.90h1.3v1.2h-1.3zM165.85 170.90h1.3v1.2h-1.3zM195.85 204.90h1.3v1.2h-1.3zM155.85 193.90h1.3v1.2h-1.3zM220.85 165.90h1.3v1.2h-1.3zM167.85 159.90h1.3v1.2h-1.3zM130.85 180.90h1.3v1.2h-1.3zM140.85 145.90h1.3v1.2h-1.3zM227.85 133.90h1.3v1.2h-1.3zM149.85 187.90h1.3v1.2h-1.3zM184.85 216.90h1.3v1.2h-1.3zM122.85 129.90h1.3v1.2h-1.3zM129.85 111.90h1.3v1.2h-1.3zM157.85 204.90h1.3v1.2h-1.3zM214.85 119.90h1.3v1.2h-1.3zM198.85 118.90h1.3v1.2h-1.3zM165.85 109.90h1.3v1.2h-1.3zM137.85 211.90h1.3v1.2h-1.3zM199.85 163.90h1.3v1.2h-1.3zM145.85 190.90h1.3v1.2h-1.3zM123.85 156.90h1.3v1.2h-1.3zM162.85 116.90h1.3v1.2h-1.3zM142.85 129.90h1.3v1.2h-1.3zM177.85 140.90h1.3v1.2h-1.3zM180.85 139.90h1.3v1.2h-1.3zM200.85 220.90h1.3v1.2h-1.3zM186.85 214.90h1.3v1.2h-1.3zM166.85 102.90h1.3v1.2h-1.3zM223.85 119.90h1.3v1.2h-1.3zM116.85 200.90h1.3v1.2h-1.3zM118.85 166.90h1.3v1.2h-1.3zM162.85 98.90h1.3v1.2h-1.3zM165.85 107.90h1.3v1.2h-1.3zM197.85 215.90h1.3v1.2h-1.3zM160.85 173.90h1.3v1.2h-1.3zM157.85 179.90h1.3v1.2h-1.3zM183.85 92.90h1.3v1.2h-1.3zM178.85 94.90h1.3v1.2h-1.3zM158.85 117.90h1.3v1.2h-1.3zM163.85 108.90h1.3v1.2h-1.3zM148.85 128.90h1.3v1.2h-1.3zM174.85 161.90h1.3v1.2h-1.3zM158.85 108.90h1.3v1.2h-1.3zM154.85 99.90h1.3v1.2h-1.3zM176.85 149.90h1.3v1.2h-1.3zM147.85 157.90h1.3v1.2h-1.3zM161.85 133.90h1.3v1.2h-1.3zM166.85 145.90h1.3v1.2h-1.3zM150.85 116.90h1.3v1.2h-1.3zM163.85 136.90h1.3v1.2h-1.3zM170.85 106.90h1.3v1.2h-1.3zM149.85 139.90h1.3v1.2h-1.3zM158.85 161.90h1.3v1.2h-1.3zM179.85 160.90h1.3v1.2h-1.3zM180.85 155.90h1.3v1.2h-1.3zM173.85 94.90h1.3v1.2h-1.3zM173.85 151.90h1.3v1.2h-1.3zM148.85 98.90h1.3v1.2h-1.3zM177.85 103.90h1.3v1.2h-1.3zM143.85 116.90h1.3v1.2h-1.3zM155.85 112.90h1.3v1.2h-1.3zM148.85 123.90h1.3v1.2h-1.3zM175.85 93.90h1.3v1.2h-1.3zM160.85 159.90h1.3v1.2h-1.3zM173.85 92.90h1.3v1.2h-1.3zM164.85 104.90h1.3v1.2h-1.3zM147.85 153.90h1.3v1.2h-1.3zM178.85 163.90h1.3v1.2h-1.3zM142.85 91.90h1.3v1.2h-1.3zM155.85 117.90h1.3v1.2h-1.3zM145.85 157.90h1.3v1.2h-1.3zM160.85 162.90h1.3v1.2h-1.3zM143.85 124.90h1.3v1.2h-1.3zM145.85 161.90h1.3v1.2h-1.3zM177.85 98.90h1.3v1.2h-1.3zM155.85 161.90h1.3v1.2h-1.3zM165.85 119.90h1.3v1.2h-1.3zM143.85 111.90h1.3v1.2h-1.3zM145.85 111.90h1.3v1.2h-1.3zM141.85 110.90h1.3v1.2h-1.3zM146.85 112.90h1.3v1.2h-1.3zM143.85 112.90h1.3v1.2h-1.3zM145.85 110.90h1.3v1.2h-1.3zM148.85 113.90h1.3v1.2h-1.3zM146.85 114.90h1.3v1.2h-1.3zM145.85 112.90h1.3v1.2h-1.3zM144.85 110.90h1.3v1.2h-1.3z" fill="#087808" fill-opacity="0.9"/>
  <path d="M170.5 14V162.6H312" stroke="#1c1c1c" stroke-width="1.6" fill="none"/>
  <path d="M170.5 162.6L185.5 311.5" stroke="#007a00" stroke-width="1.15" fill="none"/>
 </svg>
</div>
</body></html>
